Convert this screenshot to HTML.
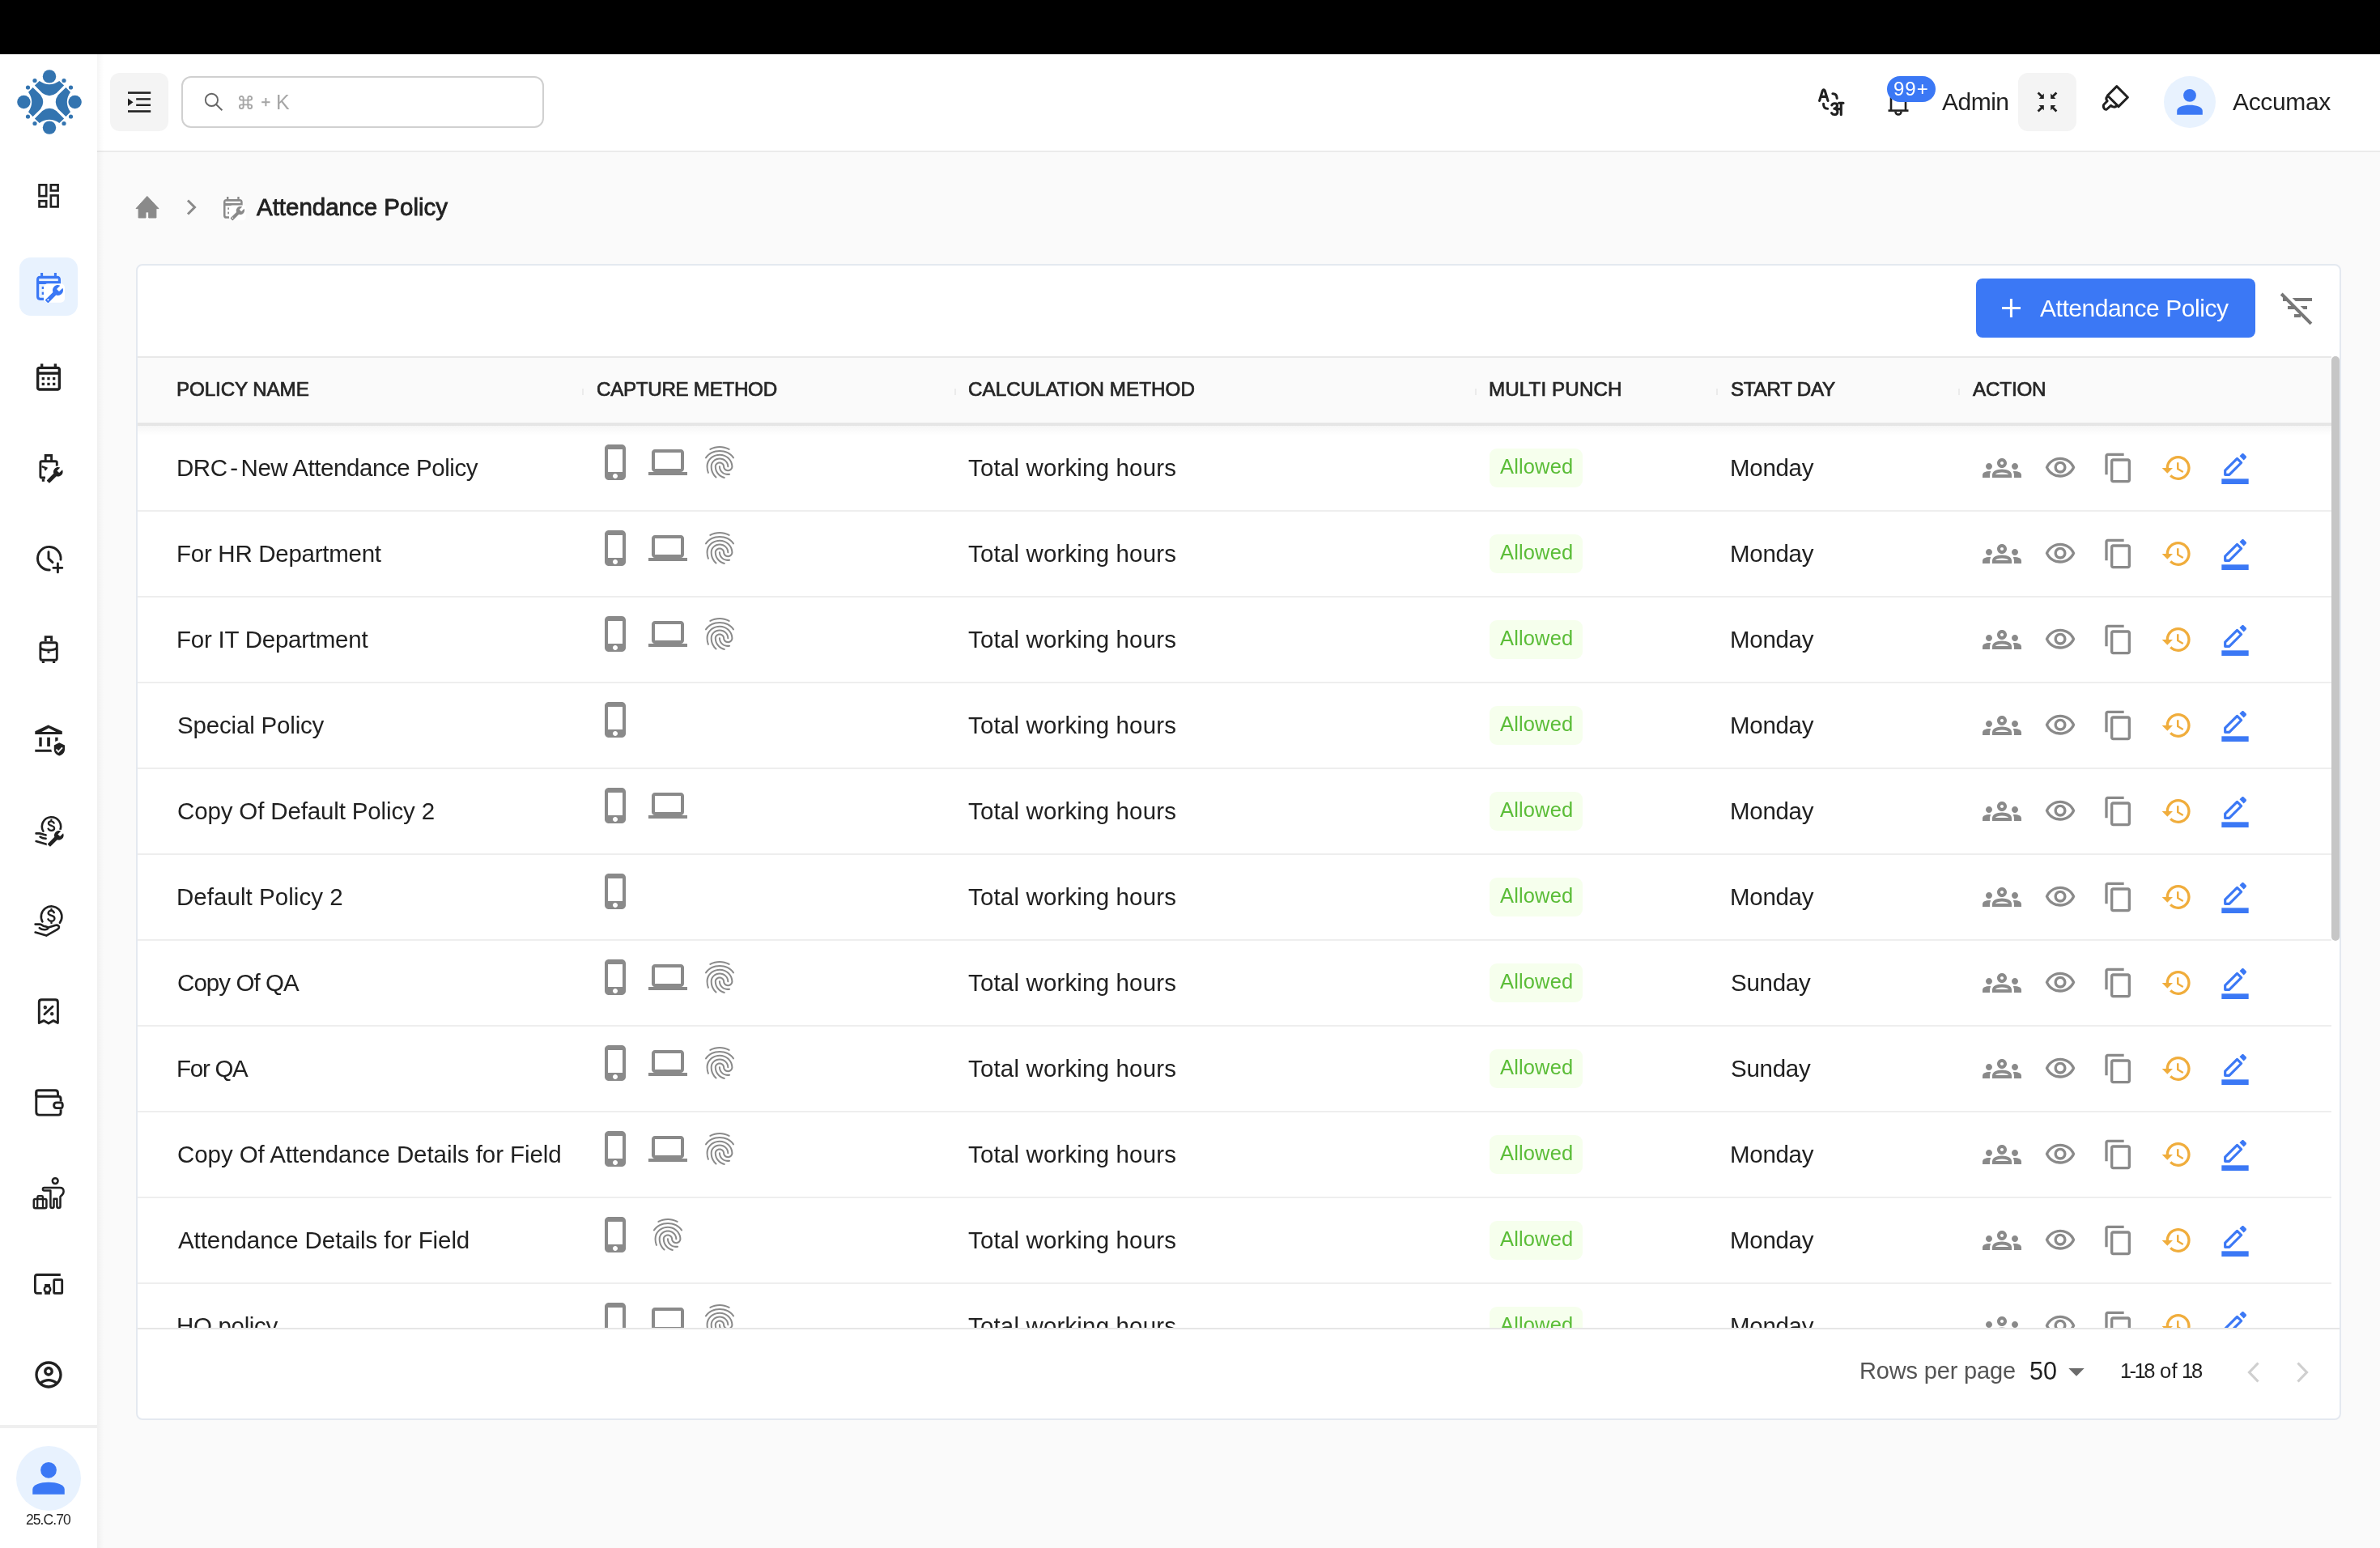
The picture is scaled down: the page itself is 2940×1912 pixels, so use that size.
<!DOCTYPE html>
<html><head><meta charset="utf-8"><title>Attendance Policy</title><style>*{box-sizing:border-box;margin:0;padding:0}
html,body{width:2940px;height:1912px;overflow:hidden;background:#fafafa;font-family:"Liberation Sans",sans-serif;color:#212121}
.abs{position:absolute}
.t{white-space:nowrap;will-change:transform}
svg{display:block;overflow:visible}</style></head><body>
<div class="abs" style="left:0;top:0;width:2940px;height:67px;background:#000"></div>
<div class="abs" style="left:0;top:67px;width:120px;height:1845px;background:#fff"></div>
<div class="abs" style="left:120px;top:67px;width:2820px;height:119px;background:#fff"></div>
<div class="abs" style="left:120px;top:186px;width:2820px;height:2px;background:#ebebeb"></div>
<div class="abs" style="left:120px;top:67px;width:8px;height:1845px;background:linear-gradient(90deg,rgba(0,0,0,0.04),rgba(0,0,0,0))"></div>
<svg class="abs" style="left:16px;top:81px" width="90" height="90" viewBox="-45 -45 90 90"><g fill="#3374b0"><g transform="rotate(0)"><path d="M-12.3,-26 Q0,-17.6 12.3,-26 L18.1,-20.4 L8.7,-10.9 Q0,-4.6 -8.7,-10.9 L-18.1,-20.4 Z"/><circle cx="0" cy="-31.6" r="8.2"/><circle cx="-18" cy="-26.5" r="2.6"/><circle cx="18" cy="-26.5" r="2.6"/></g><g transform="rotate(90)"><path d="M-12.3,-26 Q0,-17.6 12.3,-26 L18.1,-20.4 L8.7,-10.9 Q0,-4.6 -8.7,-10.9 L-18.1,-20.4 Z"/><circle cx="0" cy="-31.6" r="8.2"/><circle cx="-18" cy="-26.5" r="2.6"/><circle cx="18" cy="-26.5" r="2.6"/></g><g transform="rotate(180)"><path d="M-12.3,-26 Q0,-17.6 12.3,-26 L18.1,-20.4 L8.7,-10.9 Q0,-4.6 -8.7,-10.9 L-18.1,-20.4 Z"/><circle cx="0" cy="-31.6" r="8.2"/><circle cx="-18" cy="-26.5" r="2.6"/><circle cx="18" cy="-26.5" r="2.6"/></g><g transform="rotate(270)"><path d="M-12.3,-26 Q0,-17.6 12.3,-26 L18.1,-20.4 L8.7,-10.9 Q0,-4.6 -8.7,-10.9 L-18.1,-20.4 Z"/><circle cx="0" cy="-31.6" r="8.2"/><circle cx="-18" cy="-26.5" r="2.6"/><circle cx="18" cy="-26.5" r="2.6"/></g></g></svg>
<div class="abs" style="left:136px;top:90px;width:72px;height:72px;background:#f4f4f4;border-radius:12px"></div>
<svg class="abs" style="left:136px;top:90px" width="72" height="72" viewBox="0 0 72 72" fill="#212121"><rect x="22" y="23.3" width="28.2" height="2.6"/><rect x="32.2" y="31.2" width="17.8" height="2.4"/><rect x="32.2" y="38.6" width="17.8" height="2.4"/><rect x="22" y="46.2" width="28.2" height="2.6"/><path d="M22 31.5 L28.5 36.2 L22 41 Z"/></svg>
<div class="abs" style="left:224px;top:94px;width:448px;height:64px;border:2px solid #d0d0d0;border-radius:12px;background:#fff"></div>
<svg class="abs" style="left:249px;top:112px" width="28" height="28" viewBox="0 0 28 28" fill="none" stroke="#666" stroke-width="1.9"><circle cx="12.4" cy="11.4" r="7.6"/><path d="M17.8 16.8 L25.4 24.2"/></svg>
<svg class="abs" style="left:294px;top:117px" width="19" height="19" viewBox="0 0 20 20" fill="none" stroke="#a6a6a6" stroke-width="2"><path d="M7 7 H13 V13 H7 Z M7 7 V4.5 A2.5 2.5 0 1 0 4.5 7 H7 M13 7 V4.5 A2.5 2.5 0 1 1 15.5 7 H13 M7 13 V15.5 A2.5 2.5 0 1 1 4.5 13 H7 M13 13 V15.5 A2.5 2.5 0 1 0 15.5 13 H13"/></svg>
<svg class="abs" style="left:323px;top:121px" width="11" height="11" viewBox="0 0 11 11" fill="#a6a6a6"><rect x="4.4" y="0" width="2" height="10.2"/><rect x="0.2" y="4.2" width="10.3" height="2"/></svg>
<div class="abs t" style="left:340.90px;top:114.03px;font-size:25px;line-height:25px;font-weight:normal;color:#a6a6a6;letter-spacing:0.000px;">K</div>
<svg class="abs" style="left:2240px;top:104px" width="44" height="44" viewBox="0 0 44 44" fill="none" stroke="#212121" stroke-width="3.1" stroke-linecap="round" stroke-linejoin="round"><path d="M7.6 20.4 L11.4 8 Q12.8 5.4 14.2 8 L18 20.4 M9.9 15.4 H15.6"/><path d="M23.9 11.8 Q28.9 11.6 29.2 17.4"/><path d="M12.6 24.4 Q12.4 30.2 17.6 30.2"/><path d="M22.8 25.8 C24 23.2 29.4 22.6 29.5 26.3 C29.6 28.6 27.6 29.8 25.8 30.3 C28.6 30.4 30.2 32.2 29.9 34.7 C29.5 37.8 24.6 38.6 22.6 35.6"/><path d="M34.3 23.4 V37.6 M31.6 23.3 H37 M29 30.6 H34.3"/></svg>
<svg class="abs" style="left:2331px;top:100px" width="28" height="44" viewBox="0 0 28 44" fill="none" stroke="#212121" stroke-width="2.6"><path d="M5 36.6 V22 C5 16 9 12 14 12 C19 12 23 16 23 22 V36.6"/><path d="M1.5 36.6 H26.5"/><path d="M10.5 38 A3.5 3.5 0 0 0 17.5 38"/></svg>
<div class="abs" style="left:2331px;top:94px;width:60px;height:32px;border-radius:16px;background:#3b78f5"></div>
<div class="abs t" style="left:2339.30px;top:98.19px;font-size:24px;line-height:24px;font-weight:normal;color:#fff;letter-spacing:1.000px;">99+</div>
<div class="abs t" style="left:2398.70px;top:110.64px;font-size:30px;line-height:30px;font-weight:normal;color:#212121;letter-spacing:-0.500px;">Admin</div>
<div class="abs" style="left:2493px;top:90px;width:72px;height:72px;background:#f4f4f4;border-radius:12px"></div>
<svg class="abs" style="left:2493px;top:90px" width="72" height="72" viewBox="0 0 72 72" fill="#212121" stroke="none"><path d="M24.6 24.6 L29.6 29.6 M47.4 24.6 L42.4 29.6 M24.6 47.4 L29.6 42.4 M47.4 47.4 L42.4 42.4" stroke="#212121" stroke-width="2.8"/><path d="M31.8 25.6 V31.9 H25.6 Z M40.2 25.6 V31.9 H46.4 Z M31.8 46.2 V40.1 H25.6 Z M40.2 46.2 V40.1 H46.4 Z"/></svg>
<svg class="abs" style="left:2594px;top:103px" width="38" height="38" viewBox="0 0 38 38" fill="none" stroke="#212121" stroke-width="3" stroke-linejoin="round"><path d="M20.8 3.6 L34.4 17.2 L23 28.6 L9.4 15 Z"/><path d="M9.6 15.6 C7.6 17.6 7.4 19.8 9.2 21.8 L5.2 25.8 C3.2 27.8 5 33 8.4 32 L13.6 27.4 C15.6 29.4 18.6 30 21.2 27.4"/></svg>
<div class="abs" style="left:2673px;top:94px;width:64px;height:64px;border-radius:50%;background:#e8f2fe"></div>
<svg class="abs" style="left:2681px;top:102px" width="48" height="48" viewBox="0 0 24 24"><circle cx="12" cy="7.9" r="3.95" fill="#3b78f5"/><path fill="#3b78f5" d="M4.1 19.9 V17.5 C4.1 15 8 13.9 12 13.9 C16 13.9 19.9 15 19.9 17.5 V19.9 Z"/></svg>
<div class="abs t" style="left:2758.00px;top:110.64px;font-size:30px;line-height:30px;font-weight:normal;color:#212121;letter-spacing:-0.333px;">Accumax</div>
<svg class="abs" style="left:0;top:200px" width="120" height="70" viewBox="0 200 120 70" fill="none" stroke="#212121" stroke-width="2.7"><rect x="48.55" y="228.35" width="8.6" height="13.8"/><rect x="62.85" y="228.35" width="8.7" height="7.1"/><rect x="48.55" y="248.25" width="8.6" height="7.1"/><rect x="62.85" y="241.45" width="8.7" height="13.9"/></svg>
<div class="abs" style="left:24px;top:318px;width:72px;height:72px;background:#e8f2fe;border-radius:14px"></div>
<svg class="abs" style="left:45px;top:337px" width="36.00" height="38.00" viewBox="0 0 36 38"><path d="M9 32.3 H4.6 C2.8 32.3 1.6 31.1 1.6 29.3 V8.6 C1.6 6.8 2.8 5.4 4.6 5.4 H25.4 C27.2 5.4 28.4 6.8 28.4 8.6 V14" fill="none" stroke="#3b78f5" stroke-width="3.2"/><rect x="1.6" y="5.4" width="26.8" height="8.6" fill="#3b78f5"/><rect x="3.2" y="7.2" width="23.6" height="2.9" fill="#e8f2fe"/><rect x="5.1" y="0" width="3" height="5" fill="#3b78f5"/><rect x="21.9" y="0" width="3" height="5" fill="#3b78f5"/><rect x="6.7" y="17" width="2.6" height="3" fill="#3b78f5"/><rect x="6.7" y="23.7" width="2.4" height="3.2" fill="#3b78f5"/><rect x="9" y="13.3" width="26" height="23.5" rx="5" fill="#ffffff"/><g transform="translate(10,14)"><path d="M22.7 19l-9.1-9.1c.9-2.3.4-5-1.5-6.9-2-2-5-2.4-7.4-1.3L9 6 6 9 1.6 4.7C.4 7.1.9 10.1 2.9 12.1c1.9 1.9 4.6 2.4 6.9 1.5l9.1 9.1c.4.4 1 .4 1.4 0l2.3-2.3c.5-.4.5-1.1.1-1.4z" fill="#3b78f5" transform="translate(24,0) scale(-1,1)"/></g><circle cx="14.4" cy="33.2" r="1" fill="#ffffff"/></svg>
<svg class="abs" style="left:40.0px;top:446.0px" width="40" height="40" viewBox="0 0 24 24"><path fill="#212121" d="M19 4h-1V2h-2v2H8V2H6v2H5c-1.11 0-1.99.9-1.99 2L3 20c0 1.1.89 2 2 2h14c1.1 0 2-.9 2-2V6c0-1.1-.9-2-2-2zm0 16H5V10h14v10zm0-12H5V6h14v2zM9 14H7v-2h2v2zm4 0h-2v-2h2v2zm4 0h-2v-2h2v2zm-8 4H7v-2h2v2zm4 0h-2v-2h2v2zm4 0h-2v-2h2v2z"/></svg>
<svg class="abs" style="left:0;top:0;width:120px;height:1912px;overflow:visible" width="120" height="1912" viewBox="0 0 120 1912" fill="none" stroke="#212121" stroke-width="2.9"><path d="M56.2 569 V562.5 H63.6 V569"/><path d="M56 590 H51.5 C50.3 590 49.9 589.4 49.9 588.2 V571.6 C49.9 570.4 50.5 569.8 51.7 569.8 H68.5 C69.7 569.8 70.3 570.4 70.3 571.6 V575.7"/><path d="M51.6 576.2 L57.2 578.4 L55.4 580.8" stroke-width="2.4"/><path d="M53.4 591.5 V594.8" stroke-width="3.2"/><path d="M75 691.2 A14.3 14.3 0 1 0 61.2 704" stroke-linecap="round"/><path d="M60 681.8 V689.9 L65 694.6" stroke-linecap="round"/><path d="M65.9 701.4 H76.8 M71.4 695.9 V706.9" stroke-linecap="round"/><path d="M56.2 792 V786.6 H63.6 V792"/><rect x="49.9" y="793.7" width="20.4" height="21.5" rx="2.2"/><path d="M50.2 800.6 C54 803.8 66 803.8 69.8 800.6"/><path d="M60 804.5 V806.8"/><path d="M53.4 816.5 V818.9 M66.6 816.5 V818.9" stroke-width="3.2"/><path d="M48.3 1263.5 V1237.8 C48.3 1235.8 49.6 1234.8 51.4 1234.8 H68.4 C70.3 1234.8 71.4 1235.8 71.4 1237.8 V1263.5 L66 1260.6 L60 1264 L54 1260.6 Z" stroke-linejoin="round"/><path d="M55 1252.8 L65 1243.2" stroke-linecap="round"/><circle cx="55.8" cy="1244.3" r="1.3" stroke-width="1.8"/><circle cx="64.2" cy="1252.2" r="1.3" stroke-width="1.8"/><path d="M44.8 1354.2 V1348.6 C44.8 1347.6 46 1346.8 47.4 1346.8 H68.4 C70.4 1346.8 71.5 1348 71.5 1350 V1354.2"/><path d="M44.8 1348.5 V1373.4 C44.8 1375.6 46.2 1377.1 48.4 1377.1 H72.2 C74.1 1377.1 75.1 1376 75.1 1374 V1370.2 M75.1 1360.5 V1357.3 C75.1 1355.4 74.2 1354.2 72.4 1354.2 H45"/><path d="M75.5 1361.9 H70 C67.8 1361.9 66.6 1363.3 66.6 1365.3 C66.6 1367.3 67.8 1368.6 70 1368.6 H75.5 C77 1368.6 77.3 1367.2 77.3 1365.3 C77.3 1363.4 77 1361.9 75.5 1361.9 Z"/><circle cx="68.2" cy="1458.6" r="3.4" stroke-width="2.5"/><path d="M74.5 1490.5 V1477.9 C77.6 1475.6 78.6 1473.6 78.6 1471.4 C78.6 1468.6 76.8 1466.9 74 1466.9 H54.6 C53.6 1466.9 52.9 1467.7 52.9 1468.7 C52.9 1469.7 53.6 1470.5 54.6 1470.5 H62.4 V1489.9 C62.4 1491 63.2 1491.9 64.4 1491.9 C65.6 1491.9 66.5 1491 66.5 1489.9 V1480.8 H70.4 V1489.9 C70.4 1491 71.3 1491.9 72.5 1491.9 C73.6 1491.9 74.5 1491 74.5 1489.9" stroke-width="2.5" stroke-linejoin="round"/><rect x="41.8" y="1481" width="15.6" height="11.3" rx="1.8" stroke-width="2.5"/><path d="M46.2 1481 V1492 M53 1481 V1492 M46.4 1480.5 V1478.4 C46.4 1477.6 47 1477.2 47.8 1477.2 H51.6 C52.4 1477.2 52.9 1477.6 52.9 1478.4 V1480.5" stroke-width="2.3"/><path d="M52.4 1138.4 A12.8 12.8 0 1 1 73.9 1139.8" stroke-linecap="round" stroke-width="2.6"/><path d="M66.8 1127.2 C66 1125.5 64.8 1124.8 63.3 1124.8 C61.2 1124.8 59.6 1126 59.6 1127.8 C59.6 1130 62 1130.5 64 1131 C66 1131.5 67.4 1132.4 67.4 1134.4 C67.4 1136.4 65.6 1137.8 63.4 1137.8 C61.6 1137.8 60.2 1136.8 59.4 1135.3 M63.5 1123 V1124.8 M63.5 1137.8 V1140" stroke-width="2.4" stroke-linecap="round"/><path d="M43.6 1141.6 H49 C50.6 1141.6 52 1142.6 53.6 1143.6 C55 1144.4 58.2 1144.3 59 1145.6 C59.8 1146.8 58.6 1147.7 57 1148 C54.2 1148.6 51.2 1148.2 48.8 1146.2" stroke-linecap="round" stroke-width="2.6"/><path d="M59.2 1145.8 L68 1143 C70 1142.4 71.8 1142.8 72.6 1144 C73.4 1145.4 72.8 1146.8 71 1147.8 L57.2 1155.6 L43.6 1151.6" stroke-linecap="round" stroke-linejoin="round" stroke-width="2.6"/><path d="M53.4 1026.6 A11.6 11.6 0 1 1 74.4 1024.8" stroke-linecap="round" stroke-width="2.6"/><path d="M66.6 1016.6 C65.8 1015 64.7 1014.4 63.3 1014.4 C61.4 1014.4 59.9 1015.5 59.9 1017.1 C59.9 1019 62 1019.5 63.9 1020 C65.8 1020.5 67.1 1021.3 67.1 1023 C67.1 1024.8 65.4 1025.8 63.3 1025.8 C61.7 1025.8 60.3 1025 59.6 1023.6 M63.4 1012.6 V1014.4" stroke-width="2.3" stroke-linecap="round"/><path d="M44.6 1029.4 H48.8 C51 1029.4 53.6 1031.2 56.6 1031.4 M49.6 1033.6 C51.6 1035 54 1035.8 56.6 1035.8 M44.6 1039 L57.4 1042.8" stroke-linecap="round" stroke-width="2.6"/><path d="M43.3 906.9 V903.3 L59.6 895.6 L76.8 903.3 V906.9 Z M51.4 904 H69.2 L60.2 899.3 Z" fill="#212121" stroke="none" fill-rule="evenodd"/><path d="M48.3 910.8 H51.7 V921.9 H48.3 Z M58.2 910.8 H61.9 V921.9 H58.2 Z M68.2 910.8 H71.6 V914.5 L68.2 916 Z M43.3 925.7 H63.3 L64 928.7 H43.3 Z" fill="#212121" stroke="none"/><path d="M73.3 917.3 L80 920.6 V925.6 C80 929.4 77.2 932.4 73.3 933.6 C69.4 932.4 66.8 929.4 66.8 925.6 V920.6 Z" fill="#212121" stroke="none"/><path d="M69.4 925.6 L72.1 928.6 L77 923.4" stroke="#fff" stroke-width="1.8" fill="none"/></svg>
<svg class="abs" style="left:56.5px;top:576.4px" width="21.5" height="21.5" viewBox="0 0 24 24"><path d="M22.7 19l-9.1-9.1c.9-2.3.4-5-1.5-6.9-2-2-5-2.4-7.4-1.3L9 6 6 9 1.6 4.7C.4 7.1.9 10.1 2.9 12.1c1.9 1.9 4.6 2.4 6.9 1.5l9.1 9.1c.4.4 1 .4 1.4 0l2.3-2.3c.5-.4.5-1.1.1-1.4z" fill="none" stroke="#ffffff" stroke-width="3" transform="translate(24,0) scale(-1,1)"/><path d="M22.7 19l-9.1-9.1c.9-2.3.4-5-1.5-6.9-2-2-5-2.4-7.4-1.3L9 6 6 9 1.6 4.7C.4 7.1.9 10.1 2.9 12.1c1.9 1.9 4.6 2.4 6.9 1.5l9.1 9.1c.4.4 1 .4 1.4 0l2.3-2.3c.5-.4.5-1.1.1-1.4z" fill="#212121" transform="translate(24,0) scale(-1,1)"/></svg>
<svg class="abs" style="left:58.3px;top:1025.4px" width="21.5" height="21.5" viewBox="0 0 24 24"><path d="M22.7 19l-9.1-9.1c.9-2.3.4-5-1.5-6.9-2-2-5-2.4-7.4-1.3L9 6 6 9 1.6 4.7C.4 7.1.9 10.1 2.9 12.1c1.9 1.9 4.6 2.4 6.9 1.5l9.1 9.1c.4.4 1 .4 1.4 0l2.3-2.3c.5-.4.5-1.1.1-1.4z" fill="none" stroke="#ffffff" stroke-width="3" transform="translate(24,0) scale(-1,1)"/><path d="M22.7 19l-9.1-9.1c.9-2.3.4-5-1.5-6.9-2-2-5-2.4-7.4-1.3L9 6 6 9 1.6 4.7C.4 7.1.9 10.1 2.9 12.1c1.9 1.9 4.6 2.4 6.9 1.5l9.1 9.1c.4.4 1 .4 1.4 0l2.3-2.3c.5-.4.5-1.1.1-1.4z" fill="#212121" transform="translate(24,0) scale(-1,1)"/></svg>
<svg class="abs" style="left:0;top:1550px" width="120" height="60" viewBox="0 1550 120 60" fill="none" stroke="#212121" stroke-width="2.8"><path d="M74.8 1574.5 H46 C44.4 1574.5 43.4 1575.5 43.4 1577 V1594.8 C43.4 1596.4 44.4 1597.4 46 1597.4 H51.7"/><rect x="66.7" y="1580.6" width="10" height="16.8" rx="0.8"/><circle cx="58.5" cy="1592.5" r="3.7" stroke-width="2.5"/><rect x="55.1" y="1586" width="6.8" height="3" fill="#212121" stroke="none"/><rect x="55.1" y="1596" width="6.8" height="2.8" fill="#212121" stroke="none"/></svg>
<svg class="abs" style="left:40.0px;top:1678.0px" width="40" height="40" viewBox="0 0 24 24"><path fill="#212121" d="M12 2C6.48 2 2 6.48 2 12s4.48 10 10 10 10-4.48 10-10S17.52 2 12 2zM7.35 18.5C8.66 17.56 10.26 17 12 17s3.34.56 4.65 1.5c-1.31.94-2.91 1.5-4.65 1.5s-3.34-.56-4.65-1.5zm10.79-1.38C16.45 15.8 14.32 15 12 15s-4.45.8-6.14 2.12C4.7 15.73 4 13.95 4 12c0-4.42 3.58-8 8-8s8 3.58 8 8c0 1.95-.7 3.73-1.86 5.12zM12 6c-1.93 0-3.5 1.57-3.5 3.5S10.07 13 12 13s3.5-1.57 3.5-3.5S13.93 6 12 6zm0 5c-.83 0-1.5-.67-1.5-1.5S11.17 8 12 8s1.5.67 1.5 1.5S12.83 11 12 11z"/></svg>
<div class="abs" style="left:0;top:1760px;width:120px;height:4px;background:#efefef"></div>
<div class="abs" style="left:20px;top:1786px;width:80px;height:80px;border-radius:50%;background:#e8f2fe"></div>
<svg class="abs" style="left:30px;top:1796px" width="60" height="60" viewBox="0 0 24 24"><circle cx="12" cy="7.9" r="3.95" fill="#3b78f5"/><path fill="#3b78f5" d="M4.1 19.9 V17.5 C4.1 15 8 13.9 12 13.9 C16 13.9 19.9 15 19.9 17.5 V19.9 Z"/></svg>
<div class="abs t" style="left:31.50px;top:1869.22px;font-size:17.5px;line-height:17.5px;font-weight:normal;color:#262626;letter-spacing:-0.933px;">25.C.70</div>
<svg class="abs" style="left:166px;top:240px" width="32" height="32" viewBox="0 0 32 32" fill="#8a8a8a"><path d="M15.8 2.4 L30 17.6 H26.9 V29 H17.7 V21.9 H14 V29 H5.1 V17.6 H2 Z" stroke="#8a8a8a" stroke-width="1" stroke-linejoin="round"/></svg>
<svg class="abs" style="left:226px;top:244px" width="20" height="24" viewBox="0 0 20 24" fill="none" stroke="#8a8a8a" stroke-width="3"><path d="M6 3.5 L14.5 12 L6 20.5"/></svg>
<svg class="abs" style="left:276px;top:242.8px" width="28.44" height="30.02" viewBox="0 0 36 38"><path d="M9 32.3 H4.6 C2.8 32.3 1.6 31.1 1.6 29.3 V8.6 C1.6 6.8 2.8 5.4 4.6 5.4 H25.4 C27.2 5.4 28.4 6.8 28.4 8.6 V14" fill="none" stroke="#8a8a8a" stroke-width="3.2"/><rect x="1.6" y="5.4" width="26.8" height="8.6" fill="#8a8a8a"/><rect x="3.2" y="7.2" width="23.6" height="2.9" fill="#f9f9f9"/><rect x="5.1" y="0" width="3" height="5" fill="#8a8a8a"/><rect x="21.9" y="0" width="3" height="5" fill="#8a8a8a"/><rect x="6.7" y="17" width="2.6" height="3" fill="#8a8a8a"/><rect x="6.7" y="23.7" width="2.4" height="3.2" fill="#8a8a8a"/><rect x="9" y="13.3" width="26" height="23.5" rx="5" fill="#ffffff"/><g transform="translate(10,14)"><path d="M22.7 19l-9.1-9.1c.9-2.3.4-5-1.5-6.9-2-2-5-2.4-7.4-1.3L9 6 6 9 1.6 4.7C.4 7.1.9 10.1 2.9 12.1c1.9 1.9 4.6 2.4 6.9 1.5l9.1 9.1c.4.4 1 .4 1.4 0l2.3-2.3c.5-.4.5-1.1.1-1.4z" fill="#8a8a8a" transform="translate(24,0) scale(-1,1)"/></g><circle cx="14.4" cy="33.2" r="1" fill="#ffffff"/></svg>
<div class="abs t" style="left:317.00px;top:241.02px;font-size:29.5px;line-height:29.5px;font-weight:normal;color:#212121;letter-spacing:-0.012px;-webkit-text-stroke:0.83px #212121;">Attendance Policy</div>
<div class="abs" style="left:168px;top:326px;width:2724px;height:1428px;background:#fff;border:2px solid #e4e9f0;border-radius:8px"></div>
<div class="abs" style="left:2441px;top:344px;width:345px;height:73px;background:#3b78f5;border-radius:8px"></div>
<svg class="abs" style="left:2472px;top:368px" width="25" height="25" viewBox="0 0 25 25" fill="#fff"><rect x="10.9" y="1" width="3" height="23"/><rect x="1" y="11" width="23" height="3"/></svg>
<div class="abs t" style="left:2520.00px;top:366.14px;font-size:30px;line-height:30px;font-weight:normal;color:#fff;letter-spacing:-0.450px;">Attendance Policy</div>
<svg class="abs" style="left:2814px;top:356px" width="48" height="48" viewBox="0 0 24 24"><path fill="#777" d="M10.83 8H21V6H8.83l2 2zm5 5H18v-2h-4.17l2 2zM14 16.83V18h-4v-2h3.17l-3-3H6v-2h2.17l-3-3H3V6h.17L1.39 4.22 2.8 2.81l18.38 18.38-1.41 1.41L14 16.83z"/></svg>
<div class="abs" style="left:170px;top:440px;width:2710px;height:2px;background:#e8e8e8"></div>
<div class="abs" style="left:170px;top:442px;width:2710px;height:80px;background:#fafafa"></div>
<div class="abs" style="left:170px;top:522px;width:2710px;height:4px;background:#e6e6e6"></div>
<div class="abs" style="left:170px;top:526px;width:2710px;height:12px;background:linear-gradient(180deg,rgba(0,0,0,0.035),rgba(0,0,0,0))"></div>
<div class="abs t" style="left:218.20px;top:468.76px;font-size:24.2px;line-height:24.2px;font-weight:normal;color:#262626;letter-spacing:-0.110px;-webkit-text-stroke:0.73px #262626;">POLICY NAME</div>
<div class="abs t" style="left:736.70px;top:468.76px;font-size:24.2px;line-height:24.2px;font-weight:normal;color:#262626;letter-spacing:-0.308px;-webkit-text-stroke:0.73px #262626;">CAPTURE METHOD</div>
<div class="abs t" style="left:1196.40px;top:468.76px;font-size:24.2px;line-height:24.2px;font-weight:normal;color:#262626;letter-spacing:0.047px;-webkit-text-stroke:0.73px #262626;">CALCULATION METHOD</div>
<div class="abs t" style="left:1839.00px;top:468.76px;font-size:24.2px;line-height:24.2px;font-weight:normal;color:#262626;letter-spacing:0.100px;-webkit-text-stroke:0.73px #262626;">MULTI PUNCH</div>
<div class="abs t" style="left:2137.60px;top:468.76px;font-size:24.2px;line-height:24.2px;font-weight:normal;color:#262626;letter-spacing:-0.262px;-webkit-text-stroke:0.73px #262626;">START DAY</div>
<div class="abs t" style="left:2437.40px;top:468.76px;font-size:24.2px;line-height:24.2px;font-weight:normal;color:#262626;letter-spacing:-0.160px;-webkit-text-stroke:0.73px #262626;">ACTION</div>
<div class="abs" style="left:718.5px;top:480px;width:2px;height:8px;background:#ebebeb"></div>
<div class="abs" style="left:1179.0px;top:480px;width:2px;height:8px;background:#ebebeb"></div>
<div class="abs" style="left:1822.4px;top:480px;width:2px;height:8px;background:#ebebeb"></div>
<div class="abs" style="left:2120.3px;top:480px;width:2px;height:8px;background:#ebebeb"></div>
<div class="abs" style="left:2419.0px;top:480px;width:2px;height:8px;background:#ebebeb"></div>
<div class="abs" style="left:2880px;top:440px;width:10px;height:722px;background:#c6c6c6;border-radius:5px"></div>
<div class="abs" style="left:170px;top:526px;width:2710px;height:1114px;overflow:hidden"><div class="abs" style="left:-170px;top:-526px;width:2940px;height:1912px"><div class="abs" style="left:170px;top:630px;width:2710px;height:2px;background:#eeeeee"></div><div class="abs t" style="left:217.70px;top:563.22px;font-size:29.5px;line-height:29.5px;font-weight:normal;color:#212121;letter-spacing:-0.438px;">DRC<span style="word-spacing:-4px"> - </span>New Attendance Policy</div><svg class="abs" style="left:737px;top:547px" width="48" height="48" viewBox="0 0 24 24"><path fill="#8a8a8a" d="M15.5 1h-8C6.12 1 5 2.12 5 3.5v17C5 21.88 6.12 23 7.5 23h8c1.38 0 2.5-1.12 2.5-2.5v-17C18 2.12 16.88 1 15.5 1zm-4 21c-.83 0-1.5-.67-1.5-1.5s.67-1.5 1.5-1.5 1.5.67 1.5 1.5-.67 1.5-1.5 1.5zm4.5-4H7V4h9v14z"/></svg><svg class="abs" style="left:801px;top:547px" width="48" height="48" viewBox="0 0 24 24"><path fill="#8a8a8a" d="M20 18c1.1 0 1.99-.9 1.99-2L22 6c0-1.1-.9-2-2-2H4c-1.1 0-2 .9-2 2v10c0 1.1.9 2 2 2H0v2h24v-2h-4zM4 6h16v10H4V6z"/></svg><svg class="abs" style="left:865px;top:547px" width="48" height="48" viewBox="0 0 24 24"><path fill="#8a8a8a" d="M17.81 4.47c-.08 0-.16-.02-.23-.06C15.66 3.42 14 3 12.01 3c-1.98 0-3.86.47-5.57 1.41-.24.13-.54.04-.68-.2-.13-.24-.04-.55.2-.68C7.82 2.52 9.86 2 12.01 2c2.14 0 3.99.47 6.02 1.52.25.13.34.43.21.67-.09.18-.26.28-.43.28zM3.5 9.72c-.1 0-.2-.03-.29-.09-.23-.16-.28-.47-.12-.7.99-1.4 2.25-2.5 3.75-3.27C9.98 4.04 14 4.03 17.15 5.65c1.5.77 2.76 1.86 3.75 3.25.16.22.11.54-.12.7-.23.16-.54.11-.7-.12-.9-1.26-2.04-2.25-3.39-2.94-2.87-1.47-6.54-1.47-9.4.01-1.36.7-2.5 1.7-3.4 2.96-.08.14-.23.21-.39.21zm6.25 12.07c-.13 0-.26-.05-.35-.15-.87-.87-1.34-1.43-2.01-2.64-.69-1.23-1.05-2.73-1.05-4.34 0-2.97 2.54-5.39 5.66-5.39s5.66 2.42 5.66 5.39c0 .28-.22.5-.5.5s-.5-.22-.5-.5c0-2.42-2.09-4.39-4.66-4.39-2.57 0-4.66 1.97-4.66 4.39 0 1.44.32 2.77.93 3.85.64 1.15 1.08 1.64 1.85 2.42.19.2.19.51 0 .71-.11.1-.24.15-.37.15zm7.17-1.85c-1.19 0-2.24-.3-3.1-.89-1.49-1.01-2.38-2.65-2.38-4.39 0-.28.22-.5.5-.5s.5.22.5.5c0 1.41.72 2.74 1.94 3.56.71.48 1.54.71 2.54.71.24 0 .64-.03 1.04-.1.27-.05.53.13.58.41.05.27-.13.53-.41.58-.57.11-1.07.12-1.21.12zM14.91 22c-.04 0-.09-.01-.13-.02-1.59-.44-2.63-1.03-3.72-2.1-1.4-1.39-2.17-3.24-2.17-5.22 0-1.62 1.38-2.94 3.08-2.94 1.7 0 3.08 1.32 3.08 2.94 0 1.07.93 1.94 2.08 1.94s2.08-.87 2.08-1.94c0-3.77-3.25-6.83-7.25-6.83-2.84 0-5.44 1.58-6.61 4.03-.39.81-.59 1.76-.59 2.8 0 .78.07 2.01.67 3.61.1.26-.03.55-.29.64-.26.1-.55-.04-.64-.29-.49-1.31-.73-2.61-.73-3.96 0-1.2.23-2.290.68-3.24 1.33-2.79 4.28-4.6 7.51-4.6 4.55 0 8.25 3.51 8.25 7.83 0 1.62-1.38 2.94-3.08 2.94s-3.080-1.32-3.08-2.94c0-1.07-.93-1.94-2.08-1.94s-2.08.87-2.08 1.94c0 1.71.66 3.31 1.87 4.51.95.94 1.86 1.46 3.27 1.85.27.07.42.35.35.61-.05.23-.26.38-.47.38z"/></svg><div class="abs t" style="left:1196.40px;top:563.22px;font-size:29.5px;line-height:29.5px;font-weight:normal;color:#212121;letter-spacing:0.156px;">Total working hours</div><div class="abs" style="left:1840px;top:554px;width:115px;height:48px;background:#f6ffed;border-radius:9px"></div><div class="abs t" style="left:1852.60px;top:564.35px;font-size:25.5px;line-height:25.5px;font-weight:normal;color:#5bbd38;letter-spacing:0.150px;">Allowed</div><div class="abs t" style="left:2136.60px;top:563.22px;font-size:29.5px;line-height:29.5px;font-weight:normal;color:#212121;letter-spacing:-0.300px;">Monday</div><svg class="abs" style="left:2449px;top:554px" width="48" height="48" viewBox="0 0 24 24"><path fill="#8a8a8a" d="M4 13c1.1 0 2-.9 2-2s-.9-2-2-2-2 .9-2 2 .9 2 2 2zm1.13 1.1c-.37-.06-.74-.1-1.13-.1-.99 0-1.93.21-2.78.58C.48 14.9 0 15.62 0 16.43V18h4.5v-1.61c0-.83.23-1.61.63-2.29zM20 13c1.1 0 2-.9 2-2s-.9-2-2-2-2 .9-2 2 .9 2 2 2zm4 3.43c0-.81-.48-1.53-1.22-1.85-.85-.37-1.79-.58-2.78-.58-.39 0-.76.04-1.13.1.4.68.63 1.46.63 2.29V18H24v-1.57zm-7.76-2.78c-1.17-.52-2.61-.9-4.24-.9-1.63 0-3.07.39-4.24.9C6.68 14.13 6 15.21 6 16.39V18h12v-1.61c0-1.18-.68-2.26-1.76-2.74zM8.07 16c.09-.23.13-.39.91-.69.97-.38 1.99-.56 3.02-.56s2.05.18 3.02.56c.77.3.81.46.91.69H8.07zM12 8c.55 0 1 .45 1 1s-.45 1-1 1-1-.45-1-1 .45-1 1-1m0-2c-1.66 0-3 1.34-3 3s1.34 3 3 3 3-1.34 3-3-1.34-3-3-3z"/></svg><svg class="abs" style="left:2525.3px;top:558px" width="40" height="40" viewBox="0 0 24 24"><path fill="#8a8a8a" d="M12 6c3.79 0 7.17 2.13 8.82 5.5C19.17 14.87 15.79 17 12 17s-7.17-2.13-8.82-5.5C4.83 8.13 8.21 6 12 6m0-2C7 4 2.73 7.11 1 11.5 2.73 15.89 7 19 12 19s9.27-3.11 11-7.5C21.27 7.11 17 4 12 4zm0 5c1.38 0 2.5 1.12 2.5 2.5S13.38 14 12 14s-2.5-1.12-2.5-2.5S10.62 9 12 9m0-2c-2.48 0-4.5 2.02-4.5 4.5S9.52 16 12 16s4.5-2.02 4.5-4.5S14.48 7 12 7z"/></svg><svg class="abs" style="left:2596.7px;top:558px" width="40" height="40" viewBox="0 0 24 24"><path fill="#8a8a8a" d="M16 1H4c-1.1 0-2 .9-2 2v14h2V3h12V1zm3 4H8c-1.1 0-2 .9-2 2v14c0 1.1.9 2 2 2h11c1.1 0 2-.9 2-2V7c0-1.1-.9-2-2-2zm0 16H8V7h11v14z"/></svg><svg class="abs" style="left:2669.3px;top:558px" width="40" height="40" viewBox="0 0 24 24"><path fill="#f0ad3c" d="M13 3c-4.97 0-9 4.03-9 9H1l3.89 3.89.07.14L9 12H6c0-3.87 3.13-7 7-7s7 3.13 7 7-3.13 7-7 7c-1.93 0-3.68-.79-4.94-2.06l-1.42 1.42C8.27 19.99 10.51 21 13 21c4.97 0 9-4.03 9-9s-4.03-9-9-9zm-1 5v5l4.28 2.54.72-1.21-3.5-2.08V8H12z"/></svg><svg class="abs" style="left:2740.7px;top:558px" width="40" height="40" viewBox="0 0 24 24"><rect x="2" y="20" width="20" height="4" fill="#3b78f5"/><path d="M4.6 17 V13.9 L13.5 5 L16.6 8.1 L7.7 17 Z" fill="none" stroke="#3b78f5" stroke-width="1.9" stroke-linejoin="round"/><path d="M15.3 3.2 L17 1.5 C17.4 1.1 18 1.1 18.4 1.5 L20.1 3.2 C20.5 3.6 20.5 4.2 20.1 4.6 L18.4 6.3 Z" fill="#3b78f5"/></svg><div class="abs" style="left:170px;top:736px;width:2710px;height:2px;background:#eeeeee"></div><div class="abs t" style="left:217.70px;top:669.22px;font-size:29.5px;line-height:29.5px;font-weight:normal;color:#212121;letter-spacing:-0.275px;">For HR Department</div><svg class="abs" style="left:737px;top:653px" width="48" height="48" viewBox="0 0 24 24"><path fill="#8a8a8a" d="M15.5 1h-8C6.12 1 5 2.12 5 3.5v17C5 21.88 6.12 23 7.5 23h8c1.38 0 2.5-1.12 2.5-2.5v-17C18 2.12 16.88 1 15.5 1zm-4 21c-.83 0-1.5-.67-1.5-1.5s.67-1.5 1.5-1.5 1.5.67 1.5 1.5-.67 1.5-1.5 1.5zm4.5-4H7V4h9v14z"/></svg><svg class="abs" style="left:801px;top:653px" width="48" height="48" viewBox="0 0 24 24"><path fill="#8a8a8a" d="M20 18c1.1 0 1.99-.9 1.99-2L22 6c0-1.1-.9-2-2-2H4c-1.1 0-2 .9-2 2v10c0 1.1.9 2 2 2H0v2h24v-2h-4zM4 6h16v10H4V6z"/></svg><svg class="abs" style="left:865px;top:653px" width="48" height="48" viewBox="0 0 24 24"><path fill="#8a8a8a" d="M17.81 4.47c-.08 0-.16-.02-.23-.06C15.66 3.42 14 3 12.01 3c-1.98 0-3.86.47-5.57 1.41-.24.13-.54.04-.68-.2-.13-.24-.04-.55.2-.68C7.82 2.52 9.86 2 12.01 2c2.14 0 3.99.47 6.02 1.52.25.13.34.43.21.67-.09.18-.26.28-.43.28zM3.5 9.72c-.1 0-.2-.03-.29-.09-.23-.16-.28-.47-.12-.7.99-1.4 2.25-2.5 3.75-3.27C9.98 4.04 14 4.03 17.15 5.65c1.5.77 2.76 1.86 3.75 3.25.16.22.11.54-.12.7-.23.16-.54.11-.7-.12-.9-1.26-2.04-2.25-3.39-2.94-2.87-1.47-6.54-1.47-9.4.01-1.36.7-2.5 1.7-3.4 2.96-.08.14-.23.21-.39.21zm6.25 12.07c-.13 0-.26-.05-.35-.15-.87-.87-1.34-1.43-2.01-2.64-.69-1.23-1.05-2.73-1.05-4.34 0-2.97 2.54-5.39 5.66-5.39s5.66 2.42 5.66 5.39c0 .28-.22.5-.5.5s-.5-.22-.5-.5c0-2.42-2.09-4.39-4.66-4.39-2.57 0-4.66 1.97-4.66 4.39 0 1.44.32 2.77.93 3.85.64 1.15 1.08 1.64 1.85 2.42.19.2.19.51 0 .71-.11.1-.24.15-.37.15zm7.17-1.85c-1.19 0-2.24-.3-3.1-.89-1.49-1.01-2.38-2.65-2.38-4.39 0-.28.22-.5.5-.5s.5.22.5.5c0 1.41.72 2.74 1.94 3.56.71.48 1.54.71 2.54.71.24 0 .64-.03 1.04-.1.27-.05.53.13.58.41.05.27-.13.53-.41.58-.57.11-1.07.12-1.21.12zM14.91 22c-.04 0-.09-.01-.13-.02-1.59-.44-2.63-1.03-3.72-2.1-1.4-1.39-2.17-3.24-2.17-5.22 0-1.62 1.38-2.94 3.08-2.94 1.7 0 3.08 1.32 3.08 2.94 0 1.07.93 1.94 2.08 1.94s2.08-.87 2.08-1.94c0-3.77-3.25-6.83-7.25-6.83-2.84 0-5.44 1.58-6.61 4.03-.39.81-.59 1.76-.59 2.8 0 .78.07 2.01.67 3.61.1.26-.03.55-.29.64-.26.1-.55-.04-.64-.29-.49-1.31-.73-2.61-.73-3.96 0-1.2.23-2.290.68-3.24 1.33-2.79 4.28-4.6 7.51-4.6 4.55 0 8.25 3.51 8.25 7.83 0 1.62-1.38 2.94-3.08 2.94s-3.080-1.32-3.08-2.94c0-1.07-.93-1.94-2.08-1.94s-2.08.87-2.08 1.94c0 1.71.66 3.31 1.87 4.51.95.94 1.86 1.46 3.27 1.85.27.07.42.35.35.61-.05.23-.26.38-.47.38z"/></svg><div class="abs t" style="left:1196.40px;top:669.22px;font-size:29.5px;line-height:29.5px;font-weight:normal;color:#212121;letter-spacing:0.156px;">Total working hours</div><div class="abs" style="left:1840px;top:660px;width:115px;height:48px;background:#f6ffed;border-radius:9px"></div><div class="abs t" style="left:1852.60px;top:670.35px;font-size:25.5px;line-height:25.5px;font-weight:normal;color:#5bbd38;letter-spacing:0.150px;">Allowed</div><div class="abs t" style="left:2136.60px;top:669.22px;font-size:29.5px;line-height:29.5px;font-weight:normal;color:#212121;letter-spacing:-0.300px;">Monday</div><svg class="abs" style="left:2449px;top:660px" width="48" height="48" viewBox="0 0 24 24"><path fill="#8a8a8a" d="M4 13c1.1 0 2-.9 2-2s-.9-2-2-2-2 .9-2 2 .9 2 2 2zm1.13 1.1c-.37-.06-.74-.1-1.13-.1-.99 0-1.93.21-2.78.58C.48 14.9 0 15.62 0 16.43V18h4.5v-1.61c0-.83.23-1.61.63-2.29zM20 13c1.1 0 2-.9 2-2s-.9-2-2-2-2 .9-2 2 .9 2 2 2zm4 3.43c0-.81-.48-1.53-1.22-1.85-.85-.37-1.79-.58-2.78-.58-.39 0-.76.04-1.13.1.4.68.63 1.46.63 2.29V18H24v-1.57zm-7.76-2.78c-1.17-.52-2.61-.9-4.24-.9-1.63 0-3.07.39-4.24.9C6.68 14.13 6 15.21 6 16.39V18h12v-1.61c0-1.18-.68-2.26-1.76-2.74zM8.07 16c.09-.23.13-.39.91-.69.97-.38 1.99-.56 3.02-.56s2.05.18 3.02.56c.77.3.81.46.91.69H8.07zM12 8c.55 0 1 .45 1 1s-.45 1-1 1-1-.45-1-1 .45-1 1-1m0-2c-1.66 0-3 1.34-3 3s1.34 3 3 3 3-1.34 3-3-1.34-3-3-3z"/></svg><svg class="abs" style="left:2525.3px;top:664px" width="40" height="40" viewBox="0 0 24 24"><path fill="#8a8a8a" d="M12 6c3.79 0 7.17 2.13 8.82 5.5C19.17 14.87 15.79 17 12 17s-7.17-2.13-8.82-5.5C4.83 8.13 8.21 6 12 6m0-2C7 4 2.73 7.11 1 11.5 2.73 15.89 7 19 12 19s9.27-3.11 11-7.5C21.27 7.11 17 4 12 4zm0 5c1.38 0 2.5 1.12 2.5 2.5S13.38 14 12 14s-2.5-1.12-2.5-2.5S10.62 9 12 9m0-2c-2.48 0-4.5 2.02-4.5 4.5S9.52 16 12 16s4.5-2.02 4.5-4.5S14.48 7 12 7z"/></svg><svg class="abs" style="left:2596.7px;top:664px" width="40" height="40" viewBox="0 0 24 24"><path fill="#8a8a8a" d="M16 1H4c-1.1 0-2 .9-2 2v14h2V3h12V1zm3 4H8c-1.1 0-2 .9-2 2v14c0 1.1.9 2 2 2h11c1.1 0 2-.9 2-2V7c0-1.1-.9-2-2-2zm0 16H8V7h11v14z"/></svg><svg class="abs" style="left:2669.3px;top:664px" width="40" height="40" viewBox="0 0 24 24"><path fill="#f0ad3c" d="M13 3c-4.97 0-9 4.03-9 9H1l3.89 3.89.07.14L9 12H6c0-3.87 3.13-7 7-7s7 3.13 7 7-3.13 7-7 7c-1.93 0-3.68-.79-4.94-2.06l-1.42 1.42C8.27 19.99 10.51 21 13 21c4.97 0 9-4.03 9-9s-4.03-9-9-9zm-1 5v5l4.28 2.54.72-1.21-3.5-2.08V8H12z"/></svg><svg class="abs" style="left:2740.7px;top:664px" width="40" height="40" viewBox="0 0 24 24"><rect x="2" y="20" width="20" height="4" fill="#3b78f5"/><path d="M4.6 17 V13.9 L13.5 5 L16.6 8.1 L7.7 17 Z" fill="none" stroke="#3b78f5" stroke-width="1.9" stroke-linejoin="round"/><path d="M15.3 3.2 L17 1.5 C17.4 1.1 18 1.1 18.4 1.5 L20.1 3.2 C20.5 3.6 20.5 4.2 20.1 4.6 L18.4 6.3 Z" fill="#3b78f5"/></svg><div class="abs" style="left:170px;top:842px;width:2710px;height:2px;background:#eeeeee"></div><div class="abs t" style="left:217.70px;top:775.22px;font-size:29.5px;line-height:29.5px;font-weight:normal;color:#212121;letter-spacing:-0.238px;">For IT Department</div><svg class="abs" style="left:737px;top:759px" width="48" height="48" viewBox="0 0 24 24"><path fill="#8a8a8a" d="M15.5 1h-8C6.12 1 5 2.12 5 3.5v17C5 21.88 6.12 23 7.5 23h8c1.38 0 2.5-1.12 2.5-2.5v-17C18 2.12 16.88 1 15.5 1zm-4 21c-.83 0-1.5-.67-1.5-1.5s.67-1.5 1.5-1.5 1.5.67 1.5 1.5-.67 1.5-1.5 1.5zm4.5-4H7V4h9v14z"/></svg><svg class="abs" style="left:801px;top:759px" width="48" height="48" viewBox="0 0 24 24"><path fill="#8a8a8a" d="M20 18c1.1 0 1.99-.9 1.99-2L22 6c0-1.1-.9-2-2-2H4c-1.1 0-2 .9-2 2v10c0 1.1.9 2 2 2H0v2h24v-2h-4zM4 6h16v10H4V6z"/></svg><svg class="abs" style="left:865px;top:759px" width="48" height="48" viewBox="0 0 24 24"><path fill="#8a8a8a" d="M17.81 4.47c-.08 0-.16-.02-.23-.06C15.66 3.42 14 3 12.01 3c-1.98 0-3.86.47-5.57 1.41-.24.13-.54.04-.68-.2-.13-.24-.04-.55.2-.68C7.82 2.52 9.86 2 12.01 2c2.14 0 3.99.47 6.02 1.52.25.13.34.43.21.67-.09.18-.26.28-.43.28zM3.5 9.72c-.1 0-.2-.03-.29-.09-.23-.16-.28-.47-.12-.7.99-1.4 2.25-2.5 3.75-3.27C9.98 4.04 14 4.03 17.15 5.65c1.5.77 2.76 1.86 3.75 3.25.16.22.11.54-.12.7-.23.16-.54.11-.7-.12-.9-1.26-2.04-2.25-3.39-2.94-2.87-1.47-6.54-1.47-9.4.01-1.36.7-2.5 1.7-3.4 2.96-.08.14-.23.21-.39.21zm6.25 12.07c-.13 0-.26-.05-.35-.15-.87-.87-1.34-1.43-2.01-2.64-.69-1.23-1.05-2.73-1.05-4.34 0-2.97 2.54-5.39 5.66-5.39s5.66 2.42 5.66 5.39c0 .28-.22.5-.5.5s-.5-.22-.5-.5c0-2.42-2.09-4.39-4.66-4.39-2.57 0-4.66 1.97-4.66 4.39 0 1.44.32 2.77.93 3.85.64 1.15 1.08 1.64 1.85 2.42.19.2.19.51 0 .71-.11.1-.24.15-.37.15zm7.17-1.85c-1.19 0-2.24-.3-3.1-.89-1.49-1.01-2.38-2.65-2.38-4.39 0-.28.22-.5.5-.5s.5.22.5.5c0 1.41.72 2.74 1.94 3.56.71.48 1.54.71 2.54.71.24 0 .64-.03 1.04-.1.27-.05.53.13.58.41.05.27-.13.53-.41.58-.57.11-1.07.12-1.21.12zM14.91 22c-.04 0-.09-.01-.13-.02-1.59-.44-2.63-1.03-3.72-2.1-1.4-1.39-2.17-3.24-2.17-5.22 0-1.62 1.38-2.94 3.08-2.94 1.7 0 3.08 1.32 3.08 2.94 0 1.07.93 1.94 2.08 1.94s2.08-.87 2.08-1.94c0-3.77-3.25-6.83-7.25-6.83-2.84 0-5.44 1.58-6.61 4.03-.39.81-.59 1.76-.59 2.8 0 .78.07 2.01.67 3.61.1.26-.03.55-.29.64-.26.1-.55-.04-.64-.29-.49-1.31-.73-2.61-.73-3.96 0-1.2.23-2.290.68-3.24 1.33-2.79 4.28-4.6 7.51-4.6 4.55 0 8.25 3.51 8.25 7.83 0 1.62-1.38 2.94-3.08 2.94s-3.080-1.32-3.08-2.94c0-1.07-.93-1.94-2.08-1.94s-2.08.87-2.08 1.94c0 1.71.66 3.31 1.87 4.51.95.94 1.86 1.46 3.27 1.85.27.07.42.35.35.61-.05.23-.26.38-.47.38z"/></svg><div class="abs t" style="left:1196.40px;top:775.22px;font-size:29.5px;line-height:29.5px;font-weight:normal;color:#212121;letter-spacing:0.156px;">Total working hours</div><div class="abs" style="left:1840px;top:766px;width:115px;height:48px;background:#f6ffed;border-radius:9px"></div><div class="abs t" style="left:1852.60px;top:776.35px;font-size:25.5px;line-height:25.5px;font-weight:normal;color:#5bbd38;letter-spacing:0.150px;">Allowed</div><div class="abs t" style="left:2136.60px;top:775.22px;font-size:29.5px;line-height:29.5px;font-weight:normal;color:#212121;letter-spacing:-0.300px;">Monday</div><svg class="abs" style="left:2449px;top:766px" width="48" height="48" viewBox="0 0 24 24"><path fill="#8a8a8a" d="M4 13c1.1 0 2-.9 2-2s-.9-2-2-2-2 .9-2 2 .9 2 2 2zm1.13 1.1c-.37-.06-.74-.1-1.13-.1-.99 0-1.93.21-2.78.58C.48 14.9 0 15.62 0 16.43V18h4.5v-1.61c0-.83.23-1.61.63-2.29zM20 13c1.1 0 2-.9 2-2s-.9-2-2-2-2 .9-2 2 .9 2 2 2zm4 3.43c0-.81-.48-1.53-1.22-1.85-.85-.37-1.79-.58-2.78-.58-.39 0-.76.04-1.13.1.4.68.63 1.46.63 2.29V18H24v-1.57zm-7.76-2.78c-1.17-.52-2.61-.9-4.24-.9-1.63 0-3.07.39-4.24.9C6.68 14.13 6 15.21 6 16.39V18h12v-1.61c0-1.18-.68-2.26-1.76-2.74zM8.07 16c.09-.23.13-.39.91-.69.97-.38 1.99-.56 3.02-.56s2.05.18 3.02.56c.77.3.81.46.91.69H8.07zM12 8c.55 0 1 .45 1 1s-.45 1-1 1-1-.45-1-1 .45-1 1-1m0-2c-1.66 0-3 1.34-3 3s1.34 3 3 3 3-1.34 3-3-1.34-3-3-3z"/></svg><svg class="abs" style="left:2525.3px;top:770px" width="40" height="40" viewBox="0 0 24 24"><path fill="#8a8a8a" d="M12 6c3.79 0 7.17 2.13 8.82 5.5C19.17 14.87 15.79 17 12 17s-7.17-2.13-8.82-5.5C4.83 8.13 8.21 6 12 6m0-2C7 4 2.73 7.11 1 11.5 2.73 15.89 7 19 12 19s9.27-3.11 11-7.5C21.27 7.11 17 4 12 4zm0 5c1.38 0 2.5 1.12 2.5 2.5S13.38 14 12 14s-2.5-1.12-2.5-2.5S10.62 9 12 9m0-2c-2.48 0-4.5 2.02-4.5 4.5S9.52 16 12 16s4.5-2.02 4.5-4.5S14.48 7 12 7z"/></svg><svg class="abs" style="left:2596.7px;top:770px" width="40" height="40" viewBox="0 0 24 24"><path fill="#8a8a8a" d="M16 1H4c-1.1 0-2 .9-2 2v14h2V3h12V1zm3 4H8c-1.1 0-2 .9-2 2v14c0 1.1.9 2 2 2h11c1.1 0 2-.9 2-2V7c0-1.1-.9-2-2-2zm0 16H8V7h11v14z"/></svg><svg class="abs" style="left:2669.3px;top:770px" width="40" height="40" viewBox="0 0 24 24"><path fill="#f0ad3c" d="M13 3c-4.97 0-9 4.03-9 9H1l3.89 3.89.07.14L9 12H6c0-3.87 3.13-7 7-7s7 3.13 7 7-3.13 7-7 7c-1.93 0-3.68-.79-4.94-2.06l-1.42 1.42C8.27 19.99 10.51 21 13 21c4.97 0 9-4.03 9-9s-4.03-9-9-9zm-1 5v5l4.28 2.54.72-1.21-3.5-2.08V8H12z"/></svg><svg class="abs" style="left:2740.7px;top:770px" width="40" height="40" viewBox="0 0 24 24"><rect x="2" y="20" width="20" height="4" fill="#3b78f5"/><path d="M4.6 17 V13.9 L13.5 5 L16.6 8.1 L7.7 17 Z" fill="none" stroke="#3b78f5" stroke-width="1.9" stroke-linejoin="round"/><path d="M15.3 3.2 L17 1.5 C17.4 1.1 18 1.1 18.4 1.5 L20.1 3.2 C20.5 3.6 20.5 4.2 20.1 4.6 L18.4 6.3 Z" fill="#3b78f5"/></svg><div class="abs" style="left:170px;top:948px;width:2710px;height:2px;background:#eeeeee"></div><div class="abs t" style="left:218.70px;top:881.22px;font-size:29.5px;line-height:29.5px;font-weight:normal;color:#212121;letter-spacing:-0.177px;">Special Policy</div><svg class="abs" style="left:737px;top:865px" width="48" height="48" viewBox="0 0 24 24"><path fill="#8a8a8a" d="M15.5 1h-8C6.12 1 5 2.12 5 3.5v17C5 21.88 6.12 23 7.5 23h8c1.38 0 2.5-1.12 2.5-2.5v-17C18 2.12 16.88 1 15.5 1zm-4 21c-.83 0-1.5-.67-1.5-1.5s.67-1.5 1.5-1.5 1.5.67 1.5 1.5-.67 1.5-1.5 1.5zm4.5-4H7V4h9v14z"/></svg><div class="abs t" style="left:1196.40px;top:881.22px;font-size:29.5px;line-height:29.5px;font-weight:normal;color:#212121;letter-spacing:0.156px;">Total working hours</div><div class="abs" style="left:1840px;top:872px;width:115px;height:48px;background:#f6ffed;border-radius:9px"></div><div class="abs t" style="left:1852.60px;top:882.35px;font-size:25.5px;line-height:25.5px;font-weight:normal;color:#5bbd38;letter-spacing:0.150px;">Allowed</div><div class="abs t" style="left:2136.60px;top:881.22px;font-size:29.5px;line-height:29.5px;font-weight:normal;color:#212121;letter-spacing:-0.300px;">Monday</div><svg class="abs" style="left:2449px;top:872px" width="48" height="48" viewBox="0 0 24 24"><path fill="#8a8a8a" d="M4 13c1.1 0 2-.9 2-2s-.9-2-2-2-2 .9-2 2 .9 2 2 2zm1.13 1.1c-.37-.06-.74-.1-1.13-.1-.99 0-1.93.21-2.78.58C.48 14.9 0 15.62 0 16.43V18h4.5v-1.61c0-.83.23-1.61.63-2.29zM20 13c1.1 0 2-.9 2-2s-.9-2-2-2-2 .9-2 2 .9 2 2 2zm4 3.43c0-.81-.48-1.53-1.22-1.85-.85-.37-1.79-.58-2.78-.58-.39 0-.76.04-1.13.1.4.68.63 1.46.63 2.29V18H24v-1.57zm-7.76-2.78c-1.17-.52-2.61-.9-4.24-.9-1.63 0-3.07.39-4.24.9C6.68 14.13 6 15.21 6 16.39V18h12v-1.61c0-1.18-.68-2.26-1.76-2.74zM8.07 16c.09-.23.13-.39.91-.69.97-.38 1.99-.56 3.02-.56s2.05.18 3.02.56c.77.3.81.46.91.69H8.07zM12 8c.55 0 1 .45 1 1s-.45 1-1 1-1-.45-1-1 .45-1 1-1m0-2c-1.66 0-3 1.34-3 3s1.34 3 3 3 3-1.34 3-3-1.34-3-3-3z"/></svg><svg class="abs" style="left:2525.3px;top:876px" width="40" height="40" viewBox="0 0 24 24"><path fill="#8a8a8a" d="M12 6c3.79 0 7.17 2.13 8.82 5.5C19.17 14.87 15.79 17 12 17s-7.17-2.13-8.82-5.5C4.83 8.13 8.21 6 12 6m0-2C7 4 2.73 7.11 1 11.5 2.73 15.89 7 19 12 19s9.27-3.11 11-7.5C21.27 7.11 17 4 12 4zm0 5c1.38 0 2.5 1.12 2.5 2.5S13.38 14 12 14s-2.5-1.12-2.5-2.5S10.62 9 12 9m0-2c-2.48 0-4.5 2.02-4.5 4.5S9.52 16 12 16s4.5-2.02 4.5-4.5S14.48 7 12 7z"/></svg><svg class="abs" style="left:2596.7px;top:876px" width="40" height="40" viewBox="0 0 24 24"><path fill="#8a8a8a" d="M16 1H4c-1.1 0-2 .9-2 2v14h2V3h12V1zm3 4H8c-1.1 0-2 .9-2 2v14c0 1.1.9 2 2 2h11c1.1 0 2-.9 2-2V7c0-1.1-.9-2-2-2zm0 16H8V7h11v14z"/></svg><svg class="abs" style="left:2669.3px;top:876px" width="40" height="40" viewBox="0 0 24 24"><path fill="#f0ad3c" d="M13 3c-4.97 0-9 4.03-9 9H1l3.89 3.89.07.14L9 12H6c0-3.87 3.13-7 7-7s7 3.13 7 7-3.13 7-7 7c-1.93 0-3.68-.79-4.94-2.06l-1.42 1.42C8.27 19.99 10.51 21 13 21c4.97 0 9-4.03 9-9s-4.03-9-9-9zm-1 5v5l4.28 2.54.72-1.21-3.5-2.08V8H12z"/></svg><svg class="abs" style="left:2740.7px;top:876px" width="40" height="40" viewBox="0 0 24 24"><rect x="2" y="20" width="20" height="4" fill="#3b78f5"/><path d="M4.6 17 V13.9 L13.5 5 L16.6 8.1 L7.7 17 Z" fill="none" stroke="#3b78f5" stroke-width="1.9" stroke-linejoin="round"/><path d="M15.3 3.2 L17 1.5 C17.4 1.1 18 1.1 18.4 1.5 L20.1 3.2 C20.5 3.6 20.5 4.2 20.1 4.6 L18.4 6.3 Z" fill="#3b78f5"/></svg><div class="abs" style="left:170px;top:1054px;width:2710px;height:2px;background:#eeeeee"></div><div class="abs t" style="left:218.70px;top:987.22px;font-size:29.5px;line-height:29.5px;font-weight:normal;color:#212121;letter-spacing:-0.143px;">Copy Of Default Policy 2</div><svg class="abs" style="left:737px;top:971px" width="48" height="48" viewBox="0 0 24 24"><path fill="#8a8a8a" d="M15.5 1h-8C6.12 1 5 2.12 5 3.5v17C5 21.88 6.12 23 7.5 23h8c1.38 0 2.5-1.12 2.5-2.5v-17C18 2.12 16.88 1 15.5 1zm-4 21c-.83 0-1.5-.67-1.5-1.5s.67-1.5 1.5-1.5 1.5.67 1.5 1.5-.67 1.5-1.5 1.5zm4.5-4H7V4h9v14z"/></svg><svg class="abs" style="left:801px;top:971px" width="48" height="48" viewBox="0 0 24 24"><path fill="#8a8a8a" d="M20 18c1.1 0 1.99-.9 1.99-2L22 6c0-1.1-.9-2-2-2H4c-1.1 0-2 .9-2 2v10c0 1.1.9 2 2 2H0v2h24v-2h-4zM4 6h16v10H4V6z"/></svg><div class="abs t" style="left:1196.40px;top:987.22px;font-size:29.5px;line-height:29.5px;font-weight:normal;color:#212121;letter-spacing:0.156px;">Total working hours</div><div class="abs" style="left:1840px;top:978px;width:115px;height:48px;background:#f6ffed;border-radius:9px"></div><div class="abs t" style="left:1852.60px;top:988.35px;font-size:25.5px;line-height:25.5px;font-weight:normal;color:#5bbd38;letter-spacing:0.150px;">Allowed</div><div class="abs t" style="left:2136.60px;top:987.22px;font-size:29.5px;line-height:29.5px;font-weight:normal;color:#212121;letter-spacing:-0.300px;">Monday</div><svg class="abs" style="left:2449px;top:978px" width="48" height="48" viewBox="0 0 24 24"><path fill="#8a8a8a" d="M4 13c1.1 0 2-.9 2-2s-.9-2-2-2-2 .9-2 2 .9 2 2 2zm1.13 1.1c-.37-.06-.74-.1-1.13-.1-.99 0-1.93.21-2.78.58C.48 14.9 0 15.62 0 16.43V18h4.5v-1.61c0-.83.23-1.61.63-2.29zM20 13c1.1 0 2-.9 2-2s-.9-2-2-2-2 .9-2 2 .9 2 2 2zm4 3.43c0-.81-.48-1.53-1.22-1.85-.85-.37-1.79-.58-2.78-.58-.39 0-.76.04-1.13.1.4.68.63 1.46.63 2.29V18H24v-1.57zm-7.76-2.78c-1.17-.52-2.61-.9-4.24-.9-1.63 0-3.07.39-4.24.9C6.68 14.13 6 15.21 6 16.39V18h12v-1.61c0-1.18-.68-2.26-1.76-2.74zM8.07 16c.09-.23.13-.39.91-.69.97-.38 1.99-.56 3.02-.56s2.05.18 3.02.56c.77.3.81.46.91.69H8.07zM12 8c.55 0 1 .45 1 1s-.45 1-1 1-1-.45-1-1 .45-1 1-1m0-2c-1.66 0-3 1.34-3 3s1.34 3 3 3 3-1.34 3-3-1.34-3-3-3z"/></svg><svg class="abs" style="left:2525.3px;top:982px" width="40" height="40" viewBox="0 0 24 24"><path fill="#8a8a8a" d="M12 6c3.79 0 7.17 2.13 8.82 5.5C19.17 14.87 15.79 17 12 17s-7.17-2.13-8.82-5.5C4.83 8.13 8.21 6 12 6m0-2C7 4 2.73 7.11 1 11.5 2.73 15.89 7 19 12 19s9.27-3.11 11-7.5C21.27 7.11 17 4 12 4zm0 5c1.38 0 2.5 1.12 2.5 2.5S13.38 14 12 14s-2.5-1.12-2.5-2.5S10.62 9 12 9m0-2c-2.48 0-4.5 2.02-4.5 4.5S9.52 16 12 16s4.5-2.02 4.5-4.5S14.48 7 12 7z"/></svg><svg class="abs" style="left:2596.7px;top:982px" width="40" height="40" viewBox="0 0 24 24"><path fill="#8a8a8a" d="M16 1H4c-1.1 0-2 .9-2 2v14h2V3h12V1zm3 4H8c-1.1 0-2 .9-2 2v14c0 1.1.9 2 2 2h11c1.1 0 2-.9 2-2V7c0-1.1-.9-2-2-2zm0 16H8V7h11v14z"/></svg><svg class="abs" style="left:2669.3px;top:982px" width="40" height="40" viewBox="0 0 24 24"><path fill="#f0ad3c" d="M13 3c-4.97 0-9 4.03-9 9H1l3.89 3.89.07.14L9 12H6c0-3.87 3.13-7 7-7s7 3.13 7 7-3.13 7-7 7c-1.93 0-3.68-.79-4.94-2.06l-1.42 1.42C8.27 19.99 10.51 21 13 21c4.97 0 9-4.03 9-9s-4.03-9-9-9zm-1 5v5l4.28 2.54.72-1.21-3.5-2.08V8H12z"/></svg><svg class="abs" style="left:2740.7px;top:982px" width="40" height="40" viewBox="0 0 24 24"><rect x="2" y="20" width="20" height="4" fill="#3b78f5"/><path d="M4.6 17 V13.9 L13.5 5 L16.6 8.1 L7.7 17 Z" fill="none" stroke="#3b78f5" stroke-width="1.9" stroke-linejoin="round"/><path d="M15.3 3.2 L17 1.5 C17.4 1.1 18 1.1 18.4 1.5 L20.1 3.2 C20.5 3.6 20.5 4.2 20.1 4.6 L18.4 6.3 Z" fill="#3b78f5"/></svg><div class="abs" style="left:170px;top:1160px;width:2710px;height:2px;background:#eeeeee"></div><div class="abs t" style="left:217.70px;top:1093.22px;font-size:29.5px;line-height:29.5px;font-weight:normal;color:#212121;letter-spacing:0.047px;">Default Policy 2</div><svg class="abs" style="left:737px;top:1077px" width="48" height="48" viewBox="0 0 24 24"><path fill="#8a8a8a" d="M15.5 1h-8C6.12 1 5 2.12 5 3.5v17C5 21.88 6.12 23 7.5 23h8c1.38 0 2.5-1.12 2.5-2.5v-17C18 2.12 16.88 1 15.5 1zm-4 21c-.83 0-1.5-.67-1.5-1.5s.67-1.5 1.5-1.5 1.5.67 1.5 1.5-.67 1.5-1.5 1.5zm4.5-4H7V4h9v14z"/></svg><div class="abs t" style="left:1196.40px;top:1093.22px;font-size:29.5px;line-height:29.5px;font-weight:normal;color:#212121;letter-spacing:0.156px;">Total working hours</div><div class="abs" style="left:1840px;top:1084px;width:115px;height:48px;background:#f6ffed;border-radius:9px"></div><div class="abs t" style="left:1852.60px;top:1094.35px;font-size:25.5px;line-height:25.5px;font-weight:normal;color:#5bbd38;letter-spacing:0.150px;">Allowed</div><div class="abs t" style="left:2136.60px;top:1093.22px;font-size:29.5px;line-height:29.5px;font-weight:normal;color:#212121;letter-spacing:-0.300px;">Monday</div><svg class="abs" style="left:2449px;top:1084px" width="48" height="48" viewBox="0 0 24 24"><path fill="#8a8a8a" d="M4 13c1.1 0 2-.9 2-2s-.9-2-2-2-2 .9-2 2 .9 2 2 2zm1.13 1.1c-.37-.06-.74-.1-1.13-.1-.99 0-1.93.21-2.78.58C.48 14.9 0 15.62 0 16.43V18h4.5v-1.61c0-.83.23-1.61.63-2.29zM20 13c1.1 0 2-.9 2-2s-.9-2-2-2-2 .9-2 2 .9 2 2 2zm4 3.43c0-.81-.48-1.53-1.22-1.85-.85-.37-1.79-.58-2.78-.58-.39 0-.76.04-1.13.1.4.68.63 1.46.63 2.29V18H24v-1.57zm-7.76-2.78c-1.17-.52-2.61-.9-4.24-.9-1.63 0-3.07.39-4.24.9C6.68 14.13 6 15.21 6 16.39V18h12v-1.61c0-1.18-.68-2.26-1.76-2.74zM8.07 16c.09-.23.13-.39.91-.69.97-.38 1.99-.56 3.02-.56s2.05.18 3.02.56c.77.3.81.46.91.69H8.07zM12 8c.55 0 1 .45 1 1s-.45 1-1 1-1-.45-1-1 .45-1 1-1m0-2c-1.66 0-3 1.34-3 3s1.34 3 3 3 3-1.34 3-3-1.34-3-3-3z"/></svg><svg class="abs" style="left:2525.3px;top:1088px" width="40" height="40" viewBox="0 0 24 24"><path fill="#8a8a8a" d="M12 6c3.79 0 7.17 2.13 8.82 5.5C19.17 14.87 15.79 17 12 17s-7.17-2.13-8.82-5.5C4.83 8.13 8.21 6 12 6m0-2C7 4 2.73 7.11 1 11.5 2.73 15.89 7 19 12 19s9.27-3.11 11-7.5C21.27 7.11 17 4 12 4zm0 5c1.38 0 2.5 1.12 2.5 2.5S13.38 14 12 14s-2.5-1.12-2.5-2.5S10.62 9 12 9m0-2c-2.48 0-4.5 2.02-4.5 4.5S9.52 16 12 16s4.5-2.02 4.5-4.5S14.48 7 12 7z"/></svg><svg class="abs" style="left:2596.7px;top:1088px" width="40" height="40" viewBox="0 0 24 24"><path fill="#8a8a8a" d="M16 1H4c-1.1 0-2 .9-2 2v14h2V3h12V1zm3 4H8c-1.1 0-2 .9-2 2v14c0 1.1.9 2 2 2h11c1.1 0 2-.9 2-2V7c0-1.1-.9-2-2-2zm0 16H8V7h11v14z"/></svg><svg class="abs" style="left:2669.3px;top:1088px" width="40" height="40" viewBox="0 0 24 24"><path fill="#f0ad3c" d="M13 3c-4.97 0-9 4.03-9 9H1l3.89 3.89.07.14L9 12H6c0-3.87 3.13-7 7-7s7 3.13 7 7-3.13 7-7 7c-1.93 0-3.68-.79-4.94-2.06l-1.42 1.42C8.27 19.99 10.51 21 13 21c4.97 0 9-4.03 9-9s-4.03-9-9-9zm-1 5v5l4.28 2.54.72-1.21-3.5-2.08V8H12z"/></svg><svg class="abs" style="left:2740.7px;top:1088px" width="40" height="40" viewBox="0 0 24 24"><rect x="2" y="20" width="20" height="4" fill="#3b78f5"/><path d="M4.6 17 V13.9 L13.5 5 L16.6 8.1 L7.7 17 Z" fill="none" stroke="#3b78f5" stroke-width="1.9" stroke-linejoin="round"/><path d="M15.3 3.2 L17 1.5 C17.4 1.1 18 1.1 18.4 1.5 L20.1 3.2 C20.5 3.6 20.5 4.2 20.1 4.6 L18.4 6.3 Z" fill="#3b78f5"/></svg><div class="abs" style="left:170px;top:1266px;width:2710px;height:2px;background:#eeeeee"></div><div class="abs t" style="left:218.70px;top:1199.22px;font-size:29.5px;line-height:29.5px;font-weight:normal;color:#212121;letter-spacing:-0.922px;">Copy Of QA</div><svg class="abs" style="left:737px;top:1183px" width="48" height="48" viewBox="0 0 24 24"><path fill="#8a8a8a" d="M15.5 1h-8C6.12 1 5 2.12 5 3.5v17C5 21.88 6.12 23 7.5 23h8c1.38 0 2.5-1.12 2.5-2.5v-17C18 2.12 16.88 1 15.5 1zm-4 21c-.83 0-1.5-.67-1.5-1.5s.67-1.5 1.5-1.5 1.5.67 1.5 1.5-.67 1.5-1.5 1.5zm4.5-4H7V4h9v14z"/></svg><svg class="abs" style="left:801px;top:1183px" width="48" height="48" viewBox="0 0 24 24"><path fill="#8a8a8a" d="M20 18c1.1 0 1.99-.9 1.99-2L22 6c0-1.1-.9-2-2-2H4c-1.1 0-2 .9-2 2v10c0 1.1.9 2 2 2H0v2h24v-2h-4zM4 6h16v10H4V6z"/></svg><svg class="abs" style="left:865px;top:1183px" width="48" height="48" viewBox="0 0 24 24"><path fill="#8a8a8a" d="M17.81 4.47c-.08 0-.16-.02-.23-.06C15.66 3.42 14 3 12.01 3c-1.98 0-3.86.47-5.57 1.41-.24.13-.54.04-.68-.2-.13-.24-.04-.55.2-.68C7.82 2.52 9.86 2 12.01 2c2.14 0 3.99.47 6.02 1.52.25.13.34.43.21.67-.09.18-.26.28-.43.28zM3.5 9.72c-.1 0-.2-.03-.29-.09-.23-.16-.28-.47-.12-.7.99-1.4 2.25-2.5 3.75-3.27C9.98 4.04 14 4.03 17.15 5.65c1.5.77 2.76 1.86 3.75 3.25.16.22.11.54-.12.7-.23.16-.54.11-.7-.12-.9-1.26-2.04-2.25-3.39-2.94-2.87-1.47-6.54-1.47-9.4.01-1.36.7-2.5 1.7-3.4 2.96-.08.14-.23.21-.39.21zm6.25 12.07c-.13 0-.26-.05-.35-.15-.87-.87-1.34-1.43-2.01-2.64-.69-1.23-1.05-2.73-1.05-4.34 0-2.97 2.54-5.39 5.66-5.39s5.66 2.42 5.66 5.39c0 .28-.22.5-.5.5s-.5-.22-.5-.5c0-2.42-2.09-4.39-4.66-4.39-2.57 0-4.66 1.97-4.66 4.39 0 1.44.32 2.77.93 3.85.64 1.15 1.08 1.64 1.85 2.42.19.2.19.51 0 .71-.11.1-.24.15-.37.15zm7.17-1.85c-1.19 0-2.24-.3-3.1-.89-1.49-1.01-2.38-2.65-2.38-4.39 0-.28.22-.5.5-.5s.5.22.5.5c0 1.41.72 2.74 1.94 3.56.71.48 1.54.71 2.54.71.24 0 .64-.03 1.04-.1.27-.05.53.13.58.41.05.27-.13.53-.41.58-.57.11-1.07.12-1.21.12zM14.91 22c-.04 0-.09-.01-.13-.02-1.59-.44-2.63-1.03-3.72-2.1-1.4-1.39-2.17-3.24-2.17-5.22 0-1.62 1.38-2.94 3.08-2.94 1.7 0 3.08 1.32 3.08 2.94 0 1.07.93 1.94 2.08 1.94s2.08-.87 2.08-1.94c0-3.77-3.25-6.83-7.25-6.83-2.84 0-5.44 1.58-6.61 4.03-.39.81-.59 1.76-.59 2.8 0 .78.07 2.01.67 3.61.1.26-.03.55-.29.64-.26.1-.55-.04-.64-.29-.49-1.31-.73-2.61-.73-3.96 0-1.2.23-2.290.68-3.24 1.33-2.79 4.28-4.6 7.51-4.6 4.55 0 8.25 3.51 8.25 7.83 0 1.62-1.38 2.94-3.08 2.94s-3.080-1.32-3.08-2.94c0-1.07-.93-1.94-2.08-1.94s-2.08.87-2.08 1.94c0 1.71.66 3.31 1.87 4.51.95.94 1.86 1.46 3.27 1.85.27.07.42.35.35.61-.05.23-.26.38-.47.38z"/></svg><div class="abs t" style="left:1196.40px;top:1199.22px;font-size:29.5px;line-height:29.5px;font-weight:normal;color:#212121;letter-spacing:0.156px;">Total working hours</div><div class="abs" style="left:1840px;top:1190px;width:115px;height:48px;background:#f6ffed;border-radius:9px"></div><div class="abs t" style="left:1852.60px;top:1200.35px;font-size:25.5px;line-height:25.5px;font-weight:normal;color:#5bbd38;letter-spacing:0.150px;">Allowed</div><div class="abs t" style="left:2137.60px;top:1199.22px;font-size:29.5px;line-height:29.5px;font-weight:normal;color:#212121;letter-spacing:-0.280px;">Sunday</div><svg class="abs" style="left:2449px;top:1190px" width="48" height="48" viewBox="0 0 24 24"><path fill="#8a8a8a" d="M4 13c1.1 0 2-.9 2-2s-.9-2-2-2-2 .9-2 2 .9 2 2 2zm1.13 1.1c-.37-.06-.74-.1-1.13-.1-.99 0-1.93.21-2.78.58C.48 14.9 0 15.62 0 16.43V18h4.5v-1.61c0-.83.23-1.61.63-2.29zM20 13c1.1 0 2-.9 2-2s-.9-2-2-2-2 .9-2 2 .9 2 2 2zm4 3.43c0-.81-.48-1.53-1.22-1.85-.85-.37-1.79-.58-2.78-.58-.39 0-.76.04-1.13.1.4.68.63 1.46.63 2.29V18H24v-1.57zm-7.76-2.78c-1.17-.52-2.61-.9-4.24-.9-1.63 0-3.07.39-4.24.9C6.68 14.13 6 15.21 6 16.39V18h12v-1.61c0-1.18-.68-2.26-1.76-2.74zM8.07 16c.09-.23.13-.39.91-.69.97-.38 1.99-.56 3.02-.56s2.05.18 3.02.56c.77.3.81.46.91.69H8.07zM12 8c.55 0 1 .45 1 1s-.45 1-1 1-1-.45-1-1 .45-1 1-1m0-2c-1.66 0-3 1.34-3 3s1.34 3 3 3 3-1.34 3-3-1.34-3-3-3z"/></svg><svg class="abs" style="left:2525.3px;top:1194px" width="40" height="40" viewBox="0 0 24 24"><path fill="#8a8a8a" d="M12 6c3.79 0 7.17 2.13 8.82 5.5C19.17 14.87 15.79 17 12 17s-7.17-2.13-8.82-5.5C4.83 8.13 8.21 6 12 6m0-2C7 4 2.73 7.11 1 11.5 2.73 15.89 7 19 12 19s9.27-3.11 11-7.5C21.27 7.11 17 4 12 4zm0 5c1.38 0 2.5 1.12 2.5 2.5S13.38 14 12 14s-2.5-1.12-2.5-2.5S10.62 9 12 9m0-2c-2.48 0-4.5 2.02-4.5 4.5S9.52 16 12 16s4.5-2.02 4.5-4.5S14.48 7 12 7z"/></svg><svg class="abs" style="left:2596.7px;top:1194px" width="40" height="40" viewBox="0 0 24 24"><path fill="#8a8a8a" d="M16 1H4c-1.1 0-2 .9-2 2v14h2V3h12V1zm3 4H8c-1.1 0-2 .9-2 2v14c0 1.1.9 2 2 2h11c1.1 0 2-.9 2-2V7c0-1.1-.9-2-2-2zm0 16H8V7h11v14z"/></svg><svg class="abs" style="left:2669.3px;top:1194px" width="40" height="40" viewBox="0 0 24 24"><path fill="#f0ad3c" d="M13 3c-4.97 0-9 4.03-9 9H1l3.89 3.89.07.14L9 12H6c0-3.87 3.13-7 7-7s7 3.13 7 7-3.13 7-7 7c-1.93 0-3.68-.79-4.94-2.06l-1.42 1.42C8.27 19.99 10.51 21 13 21c4.97 0 9-4.03 9-9s-4.03-9-9-9zm-1 5v5l4.28 2.54.72-1.21-3.5-2.08V8H12z"/></svg><svg class="abs" style="left:2740.7px;top:1194px" width="40" height="40" viewBox="0 0 24 24"><rect x="2" y="20" width="20" height="4" fill="#3b78f5"/><path d="M4.6 17 V13.9 L13.5 5 L16.6 8.1 L7.7 17 Z" fill="none" stroke="#3b78f5" stroke-width="1.9" stroke-linejoin="round"/><path d="M15.3 3.2 L17 1.5 C17.4 1.1 18 1.1 18.4 1.5 L20.1 3.2 C20.5 3.6 20.5 4.2 20.1 4.6 L18.4 6.3 Z" fill="#3b78f5"/></svg><div class="abs" style="left:170px;top:1372px;width:2710px;height:2px;background:#eeeeee"></div><div class="abs t" style="left:217.70px;top:1305.22px;font-size:29.5px;line-height:29.5px;font-weight:normal;color:#212121;letter-spacing:-1.260px;">For QA</div><svg class="abs" style="left:737px;top:1289px" width="48" height="48" viewBox="0 0 24 24"><path fill="#8a8a8a" d="M15.5 1h-8C6.12 1 5 2.12 5 3.5v17C5 21.88 6.12 23 7.5 23h8c1.38 0 2.5-1.12 2.5-2.5v-17C18 2.12 16.88 1 15.5 1zm-4 21c-.83 0-1.5-.67-1.5-1.5s.67-1.5 1.5-1.5 1.5.67 1.5 1.5-.67 1.5-1.5 1.5zm4.5-4H7V4h9v14z"/></svg><svg class="abs" style="left:801px;top:1289px" width="48" height="48" viewBox="0 0 24 24"><path fill="#8a8a8a" d="M20 18c1.1 0 1.99-.9 1.99-2L22 6c0-1.1-.9-2-2-2H4c-1.1 0-2 .9-2 2v10c0 1.1.9 2 2 2H0v2h24v-2h-4zM4 6h16v10H4V6z"/></svg><svg class="abs" style="left:865px;top:1289px" width="48" height="48" viewBox="0 0 24 24"><path fill="#8a8a8a" d="M17.81 4.47c-.08 0-.16-.02-.23-.06C15.66 3.42 14 3 12.01 3c-1.98 0-3.86.47-5.57 1.41-.24.13-.54.04-.68-.2-.13-.24-.04-.55.2-.68C7.82 2.52 9.86 2 12.01 2c2.14 0 3.99.47 6.02 1.52.25.13.34.43.21.67-.09.18-.26.28-.43.28zM3.5 9.72c-.1 0-.2-.03-.29-.09-.23-.16-.28-.47-.12-.7.99-1.4 2.25-2.5 3.75-3.27C9.98 4.04 14 4.03 17.15 5.65c1.5.77 2.76 1.86 3.75 3.25.16.22.11.54-.12.7-.23.16-.54.11-.7-.12-.9-1.26-2.04-2.25-3.39-2.94-2.87-1.47-6.54-1.47-9.4.01-1.36.7-2.5 1.7-3.4 2.96-.08.14-.23.21-.39.21zm6.25 12.07c-.13 0-.26-.05-.35-.15-.87-.87-1.34-1.43-2.01-2.64-.69-1.23-1.05-2.73-1.05-4.34 0-2.97 2.54-5.39 5.66-5.39s5.66 2.42 5.66 5.39c0 .28-.22.5-.5.5s-.5-.22-.5-.5c0-2.42-2.09-4.39-4.66-4.39-2.57 0-4.66 1.97-4.66 4.39 0 1.44.32 2.77.93 3.85.64 1.15 1.08 1.64 1.85 2.42.19.2.19.51 0 .71-.11.1-.24.15-.37.15zm7.17-1.85c-1.19 0-2.24-.3-3.1-.89-1.49-1.01-2.38-2.65-2.38-4.39 0-.28.22-.5.5-.5s.5.22.5.5c0 1.41.72 2.74 1.94 3.56.71.48 1.54.71 2.54.71.24 0 .64-.03 1.04-.1.27-.05.53.13.58.41.05.27-.13.53-.41.58-.57.11-1.07.12-1.21.12zM14.91 22c-.04 0-.09-.01-.13-.02-1.59-.44-2.63-1.03-3.72-2.1-1.4-1.39-2.17-3.24-2.17-5.22 0-1.62 1.38-2.94 3.08-2.94 1.7 0 3.08 1.32 3.08 2.94 0 1.07.93 1.94 2.08 1.94s2.08-.87 2.08-1.94c0-3.77-3.25-6.83-7.25-6.83-2.84 0-5.44 1.58-6.61 4.03-.39.81-.59 1.76-.59 2.8 0 .78.07 2.01.67 3.61.1.26-.03.55-.29.64-.26.1-.55-.04-.64-.29-.49-1.31-.73-2.61-.73-3.96 0-1.2.23-2.290.68-3.24 1.33-2.79 4.28-4.6 7.51-4.6 4.55 0 8.25 3.51 8.25 7.83 0 1.62-1.38 2.94-3.08 2.94s-3.080-1.32-3.08-2.94c0-1.07-.93-1.94-2.08-1.94s-2.08.87-2.08 1.94c0 1.71.66 3.31 1.87 4.51.95.94 1.86 1.46 3.27 1.85.27.07.42.35.35.61-.05.23-.26.38-.47.38z"/></svg><div class="abs t" style="left:1196.40px;top:1305.22px;font-size:29.5px;line-height:29.5px;font-weight:normal;color:#212121;letter-spacing:0.156px;">Total working hours</div><div class="abs" style="left:1840px;top:1296px;width:115px;height:48px;background:#f6ffed;border-radius:9px"></div><div class="abs t" style="left:1852.60px;top:1306.35px;font-size:25.5px;line-height:25.5px;font-weight:normal;color:#5bbd38;letter-spacing:0.150px;">Allowed</div><div class="abs t" style="left:2137.60px;top:1305.22px;font-size:29.5px;line-height:29.5px;font-weight:normal;color:#212121;letter-spacing:-0.280px;">Sunday</div><svg class="abs" style="left:2449px;top:1296px" width="48" height="48" viewBox="0 0 24 24"><path fill="#8a8a8a" d="M4 13c1.1 0 2-.9 2-2s-.9-2-2-2-2 .9-2 2 .9 2 2 2zm1.13 1.1c-.37-.06-.74-.1-1.13-.1-.99 0-1.93.21-2.78.58C.48 14.9 0 15.62 0 16.43V18h4.5v-1.61c0-.83.23-1.61.63-2.29zM20 13c1.1 0 2-.9 2-2s-.9-2-2-2-2 .9-2 2 .9 2 2 2zm4 3.43c0-.81-.48-1.53-1.22-1.85-.85-.37-1.79-.58-2.78-.58-.39 0-.76.04-1.13.1.4.68.63 1.46.63 2.29V18H24v-1.57zm-7.76-2.78c-1.17-.52-2.61-.9-4.24-.9-1.63 0-3.07.39-4.24.9C6.68 14.13 6 15.21 6 16.39V18h12v-1.61c0-1.18-.68-2.26-1.76-2.74zM8.07 16c.09-.23.13-.39.91-.69.97-.38 1.99-.56 3.02-.56s2.05.18 3.02.56c.77.3.81.46.91.69H8.07zM12 8c.55 0 1 .45 1 1s-.45 1-1 1-1-.45-1-1 .45-1 1-1m0-2c-1.66 0-3 1.34-3 3s1.34 3 3 3 3-1.34 3-3-1.34-3-3-3z"/></svg><svg class="abs" style="left:2525.3px;top:1300px" width="40" height="40" viewBox="0 0 24 24"><path fill="#8a8a8a" d="M12 6c3.79 0 7.17 2.13 8.82 5.5C19.17 14.87 15.79 17 12 17s-7.17-2.13-8.82-5.5C4.83 8.13 8.21 6 12 6m0-2C7 4 2.73 7.11 1 11.5 2.73 15.89 7 19 12 19s9.27-3.11 11-7.5C21.27 7.11 17 4 12 4zm0 5c1.38 0 2.5 1.12 2.5 2.5S13.38 14 12 14s-2.5-1.12-2.5-2.5S10.62 9 12 9m0-2c-2.48 0-4.5 2.02-4.5 4.5S9.52 16 12 16s4.5-2.02 4.5-4.5S14.48 7 12 7z"/></svg><svg class="abs" style="left:2596.7px;top:1300px" width="40" height="40" viewBox="0 0 24 24"><path fill="#8a8a8a" d="M16 1H4c-1.1 0-2 .9-2 2v14h2V3h12V1zm3 4H8c-1.1 0-2 .9-2 2v14c0 1.1.9 2 2 2h11c1.1 0 2-.9 2-2V7c0-1.1-.9-2-2-2zm0 16H8V7h11v14z"/></svg><svg class="abs" style="left:2669.3px;top:1300px" width="40" height="40" viewBox="0 0 24 24"><path fill="#f0ad3c" d="M13 3c-4.97 0-9 4.03-9 9H1l3.89 3.89.07.14L9 12H6c0-3.87 3.13-7 7-7s7 3.13 7 7-3.13 7-7 7c-1.93 0-3.68-.79-4.94-2.06l-1.42 1.42C8.27 19.99 10.51 21 13 21c4.97 0 9-4.03 9-9s-4.03-9-9-9zm-1 5v5l4.28 2.54.72-1.21-3.5-2.08V8H12z"/></svg><svg class="abs" style="left:2740.7px;top:1300px" width="40" height="40" viewBox="0 0 24 24"><rect x="2" y="20" width="20" height="4" fill="#3b78f5"/><path d="M4.6 17 V13.9 L13.5 5 L16.6 8.1 L7.7 17 Z" fill="none" stroke="#3b78f5" stroke-width="1.9" stroke-linejoin="round"/><path d="M15.3 3.2 L17 1.5 C17.4 1.1 18 1.1 18.4 1.5 L20.1 3.2 C20.5 3.6 20.5 4.2 20.1 4.6 L18.4 6.3 Z" fill="#3b78f5"/></svg><div class="abs" style="left:170px;top:1478px;width:2710px;height:2px;background:#eeeeee"></div><div class="abs t" style="left:218.70px;top:1411.22px;font-size:29.5px;line-height:29.5px;font-weight:normal;color:#212121;letter-spacing:-0.071px;">Copy Of Attendance Details for Field</div><svg class="abs" style="left:737px;top:1395px" width="48" height="48" viewBox="0 0 24 24"><path fill="#8a8a8a" d="M15.5 1h-8C6.12 1 5 2.12 5 3.5v17C5 21.88 6.12 23 7.5 23h8c1.38 0 2.5-1.12 2.5-2.5v-17C18 2.12 16.88 1 15.5 1zm-4 21c-.83 0-1.5-.67-1.5-1.5s.67-1.5 1.5-1.5 1.5.67 1.5 1.5-.67 1.5-1.5 1.5zm4.5-4H7V4h9v14z"/></svg><svg class="abs" style="left:801px;top:1395px" width="48" height="48" viewBox="0 0 24 24"><path fill="#8a8a8a" d="M20 18c1.1 0 1.99-.9 1.99-2L22 6c0-1.1-.9-2-2-2H4c-1.1 0-2 .9-2 2v10c0 1.1.9 2 2 2H0v2h24v-2h-4zM4 6h16v10H4V6z"/></svg><svg class="abs" style="left:865px;top:1395px" width="48" height="48" viewBox="0 0 24 24"><path fill="#8a8a8a" d="M17.81 4.47c-.08 0-.16-.02-.23-.06C15.66 3.42 14 3 12.01 3c-1.98 0-3.86.47-5.57 1.41-.24.13-.54.04-.68-.2-.13-.24-.04-.55.2-.68C7.82 2.52 9.86 2 12.01 2c2.14 0 3.99.47 6.02 1.52.25.13.34.43.21.67-.09.18-.26.28-.43.28zM3.5 9.72c-.1 0-.2-.03-.29-.09-.23-.16-.28-.47-.12-.7.99-1.4 2.25-2.5 3.75-3.27C9.98 4.04 14 4.03 17.15 5.65c1.5.77 2.76 1.86 3.75 3.25.16.22.11.54-.12.7-.23.16-.54.11-.7-.12-.9-1.26-2.04-2.25-3.39-2.94-2.87-1.47-6.54-1.47-9.4.01-1.36.7-2.5 1.7-3.4 2.96-.08.14-.23.21-.39.21zm6.25 12.07c-.13 0-.26-.05-.35-.15-.87-.87-1.34-1.43-2.01-2.64-.69-1.23-1.05-2.73-1.05-4.34 0-2.97 2.54-5.39 5.66-5.39s5.66 2.42 5.66 5.39c0 .28-.22.5-.5.5s-.5-.22-.5-.5c0-2.42-2.09-4.39-4.66-4.39-2.57 0-4.66 1.97-4.66 4.39 0 1.44.32 2.77.93 3.85.64 1.15 1.08 1.64 1.85 2.42.19.2.19.51 0 .71-.11.1-.24.15-.37.15zm7.17-1.85c-1.19 0-2.24-.3-3.1-.89-1.49-1.01-2.38-2.65-2.38-4.39 0-.28.22-.5.5-.5s.5.22.5.5c0 1.41.72 2.74 1.94 3.56.71.48 1.54.71 2.54.71.24 0 .64-.03 1.04-.1.27-.05.53.13.58.41.05.27-.13.53-.41.58-.57.11-1.07.12-1.21.12zM14.91 22c-.04 0-.09-.01-.13-.02-1.59-.44-2.63-1.03-3.72-2.1-1.4-1.39-2.17-3.24-2.17-5.22 0-1.62 1.38-2.94 3.08-2.94 1.7 0 3.08 1.32 3.08 2.94 0 1.07.93 1.94 2.08 1.94s2.08-.87 2.08-1.94c0-3.77-3.25-6.83-7.25-6.83-2.84 0-5.44 1.58-6.61 4.03-.39.81-.59 1.76-.59 2.8 0 .78.07 2.01.67 3.61.1.26-.03.55-.29.64-.26.1-.55-.04-.64-.29-.49-1.31-.73-2.61-.73-3.96 0-1.2.23-2.290.68-3.24 1.33-2.79 4.28-4.6 7.51-4.6 4.55 0 8.25 3.51 8.25 7.83 0 1.62-1.38 2.94-3.08 2.94s-3.080-1.32-3.08-2.94c0-1.07-.93-1.94-2.08-1.94s-2.08.87-2.08 1.94c0 1.71.66 3.31 1.87 4.51.95.94 1.86 1.46 3.27 1.85.27.07.42.35.35.61-.05.23-.26.38-.47.38z"/></svg><div class="abs t" style="left:1196.40px;top:1411.22px;font-size:29.5px;line-height:29.5px;font-weight:normal;color:#212121;letter-spacing:0.156px;">Total working hours</div><div class="abs" style="left:1840px;top:1402px;width:115px;height:48px;background:#f6ffed;border-radius:9px"></div><div class="abs t" style="left:1852.60px;top:1412.35px;font-size:25.5px;line-height:25.5px;font-weight:normal;color:#5bbd38;letter-spacing:0.150px;">Allowed</div><div class="abs t" style="left:2136.60px;top:1411.22px;font-size:29.5px;line-height:29.5px;font-weight:normal;color:#212121;letter-spacing:-0.300px;">Monday</div><svg class="abs" style="left:2449px;top:1402px" width="48" height="48" viewBox="0 0 24 24"><path fill="#8a8a8a" d="M4 13c1.1 0 2-.9 2-2s-.9-2-2-2-2 .9-2 2 .9 2 2 2zm1.13 1.1c-.37-.06-.74-.1-1.13-.1-.99 0-1.93.21-2.78.58C.48 14.9 0 15.62 0 16.43V18h4.5v-1.61c0-.83.23-1.61.63-2.29zM20 13c1.1 0 2-.9 2-2s-.9-2-2-2-2 .9-2 2 .9 2 2 2zm4 3.43c0-.81-.48-1.53-1.22-1.85-.85-.37-1.79-.58-2.78-.58-.39 0-.76.04-1.13.1.4.68.63 1.46.63 2.29V18H24v-1.57zm-7.76-2.78c-1.17-.52-2.61-.9-4.24-.9-1.63 0-3.07.39-4.24.9C6.68 14.13 6 15.21 6 16.39V18h12v-1.61c0-1.18-.68-2.26-1.76-2.74zM8.07 16c.09-.23.13-.39.91-.69.97-.38 1.99-.56 3.02-.56s2.05.18 3.02.56c.77.3.81.46.91.69H8.07zM12 8c.55 0 1 .45 1 1s-.45 1-1 1-1-.45-1-1 .45-1 1-1m0-2c-1.66 0-3 1.34-3 3s1.34 3 3 3 3-1.34 3-3-1.34-3-3-3z"/></svg><svg class="abs" style="left:2525.3px;top:1406px" width="40" height="40" viewBox="0 0 24 24"><path fill="#8a8a8a" d="M12 6c3.79 0 7.17 2.13 8.82 5.5C19.17 14.87 15.79 17 12 17s-7.17-2.13-8.82-5.5C4.83 8.13 8.21 6 12 6m0-2C7 4 2.73 7.11 1 11.5 2.73 15.89 7 19 12 19s9.27-3.11 11-7.5C21.27 7.11 17 4 12 4zm0 5c1.38 0 2.5 1.12 2.5 2.5S13.38 14 12 14s-2.5-1.12-2.5-2.5S10.62 9 12 9m0-2c-2.48 0-4.5 2.02-4.5 4.5S9.52 16 12 16s4.5-2.02 4.5-4.5S14.48 7 12 7z"/></svg><svg class="abs" style="left:2596.7px;top:1406px" width="40" height="40" viewBox="0 0 24 24"><path fill="#8a8a8a" d="M16 1H4c-1.1 0-2 .9-2 2v14h2V3h12V1zm3 4H8c-1.1 0-2 .9-2 2v14c0 1.1.9 2 2 2h11c1.1 0 2-.9 2-2V7c0-1.1-.9-2-2-2zm0 16H8V7h11v14z"/></svg><svg class="abs" style="left:2669.3px;top:1406px" width="40" height="40" viewBox="0 0 24 24"><path fill="#f0ad3c" d="M13 3c-4.97 0-9 4.03-9 9H1l3.89 3.89.07.14L9 12H6c0-3.87 3.13-7 7-7s7 3.13 7 7-3.13 7-7 7c-1.93 0-3.68-.79-4.94-2.06l-1.42 1.42C8.27 19.99 10.51 21 13 21c4.97 0 9-4.03 9-9s-4.03-9-9-9zm-1 5v5l4.28 2.54.72-1.21-3.5-2.08V8H12z"/></svg><svg class="abs" style="left:2740.7px;top:1406px" width="40" height="40" viewBox="0 0 24 24"><rect x="2" y="20" width="20" height="4" fill="#3b78f5"/><path d="M4.6 17 V13.9 L13.5 5 L16.6 8.1 L7.7 17 Z" fill="none" stroke="#3b78f5" stroke-width="1.9" stroke-linejoin="round"/><path d="M15.3 3.2 L17 1.5 C17.4 1.1 18 1.1 18.4 1.5 L20.1 3.2 C20.5 3.6 20.5 4.2 20.1 4.6 L18.4 6.3 Z" fill="#3b78f5"/></svg><div class="abs" style="left:170px;top:1584px;width:2710px;height:2px;background:#eeeeee"></div><div class="abs t" style="left:219.70px;top:1517.22px;font-size:29.5px;line-height:29.5px;font-weight:normal;color:#212121;letter-spacing:-0.078px;">Attendance Details for Field</div><svg class="abs" style="left:737px;top:1501px" width="48" height="48" viewBox="0 0 24 24"><path fill="#8a8a8a" d="M15.5 1h-8C6.12 1 5 2.12 5 3.5v17C5 21.88 6.12 23 7.5 23h8c1.38 0 2.5-1.12 2.5-2.5v-17C18 2.12 16.88 1 15.5 1zm-4 21c-.83 0-1.5-.67-1.5-1.5s.67-1.5 1.5-1.5 1.5.67 1.5 1.5-.67 1.5-1.5 1.5zm4.5-4H7V4h9v14z"/></svg><svg class="abs" style="left:801px;top:1501px" width="48" height="48" viewBox="0 0 24 24"><path fill="#8a8a8a" d="M17.81 4.47c-.08 0-.16-.02-.23-.06C15.66 3.42 14 3 12.01 3c-1.98 0-3.86.47-5.57 1.41-.24.13-.54.04-.68-.2-.13-.24-.04-.55.2-.68C7.82 2.52 9.86 2 12.01 2c2.14 0 3.99.47 6.02 1.52.25.13.34.43.21.67-.09.18-.26.28-.43.28zM3.5 9.72c-.1 0-.2-.03-.29-.09-.23-.16-.28-.47-.12-.7.99-1.4 2.25-2.5 3.75-3.27C9.98 4.04 14 4.03 17.15 5.65c1.5.77 2.76 1.86 3.75 3.25.16.22.11.54-.12.7-.23.16-.54.11-.7-.12-.9-1.26-2.04-2.25-3.39-2.94-2.87-1.47-6.54-1.47-9.4.01-1.36.7-2.5 1.7-3.4 2.96-.08.14-.23.21-.39.21zm6.25 12.07c-.13 0-.26-.05-.35-.15-.87-.87-1.34-1.43-2.01-2.64-.69-1.23-1.05-2.73-1.05-4.34 0-2.97 2.54-5.39 5.66-5.39s5.66 2.42 5.66 5.39c0 .28-.22.5-.5.5s-.5-.22-.5-.5c0-2.42-2.09-4.39-4.66-4.39-2.57 0-4.66 1.97-4.66 4.39 0 1.44.32 2.77.93 3.85.64 1.15 1.08 1.64 1.85 2.42.19.2.19.51 0 .71-.11.1-.24.15-.37.15zm7.17-1.85c-1.19 0-2.24-.3-3.1-.89-1.49-1.01-2.38-2.65-2.38-4.39 0-.28.22-.5.5-.5s.5.22.5.5c0 1.41.72 2.74 1.94 3.56.71.48 1.54.71 2.54.71.24 0 .64-.03 1.04-.1.27-.05.53.13.58.41.05.27-.13.53-.41.58-.57.11-1.07.12-1.21.12zM14.91 22c-.04 0-.09-.01-.13-.02-1.59-.44-2.63-1.03-3.72-2.1-1.4-1.39-2.17-3.24-2.17-5.22 0-1.62 1.38-2.94 3.08-2.94 1.7 0 3.08 1.32 3.08 2.94 0 1.07.93 1.94 2.08 1.94s2.08-.87 2.08-1.94c0-3.77-3.25-6.83-7.25-6.83-2.84 0-5.44 1.58-6.61 4.03-.39.81-.59 1.76-.59 2.8 0 .78.07 2.01.67 3.61.1.26-.03.55-.29.64-.26.1-.55-.04-.64-.29-.49-1.31-.73-2.61-.73-3.96 0-1.2.23-2.290.68-3.24 1.33-2.79 4.28-4.6 7.51-4.6 4.55 0 8.25 3.51 8.25 7.83 0 1.62-1.38 2.94-3.08 2.94s-3.080-1.32-3.08-2.94c0-1.07-.93-1.94-2.08-1.94s-2.08.87-2.08 1.94c0 1.71.66 3.31 1.87 4.51.95.94 1.86 1.46 3.27 1.85.27.07.42.35.35.61-.05.23-.26.38-.47.38z"/></svg><div class="abs t" style="left:1196.40px;top:1517.22px;font-size:29.5px;line-height:29.5px;font-weight:normal;color:#212121;letter-spacing:0.156px;">Total working hours</div><div class="abs" style="left:1840px;top:1508px;width:115px;height:48px;background:#f6ffed;border-radius:9px"></div><div class="abs t" style="left:1852.60px;top:1518.35px;font-size:25.5px;line-height:25.5px;font-weight:normal;color:#5bbd38;letter-spacing:0.150px;">Allowed</div><div class="abs t" style="left:2136.60px;top:1517.22px;font-size:29.5px;line-height:29.5px;font-weight:normal;color:#212121;letter-spacing:-0.300px;">Monday</div><svg class="abs" style="left:2449px;top:1508px" width="48" height="48" viewBox="0 0 24 24"><path fill="#8a8a8a" d="M4 13c1.1 0 2-.9 2-2s-.9-2-2-2-2 .9-2 2 .9 2 2 2zm1.13 1.1c-.37-.06-.74-.1-1.13-.1-.99 0-1.93.21-2.78.58C.48 14.9 0 15.62 0 16.43V18h4.5v-1.61c0-.83.23-1.61.63-2.29zM20 13c1.1 0 2-.9 2-2s-.9-2-2-2-2 .9-2 2 .9 2 2 2zm4 3.43c0-.81-.48-1.53-1.22-1.85-.85-.37-1.79-.58-2.78-.58-.39 0-.76.04-1.13.1.4.68.63 1.46.63 2.29V18H24v-1.57zm-7.76-2.78c-1.17-.52-2.61-.9-4.24-.9-1.63 0-3.07.39-4.24.9C6.68 14.13 6 15.21 6 16.39V18h12v-1.61c0-1.18-.68-2.26-1.76-2.74zM8.07 16c.09-.23.13-.39.91-.69.97-.38 1.99-.56 3.02-.56s2.05.18 3.02.56c.77.3.81.46.91.69H8.07zM12 8c.55 0 1 .45 1 1s-.45 1-1 1-1-.45-1-1 .45-1 1-1m0-2c-1.66 0-3 1.34-3 3s1.34 3 3 3 3-1.34 3-3-1.34-3-3-3z"/></svg><svg class="abs" style="left:2525.3px;top:1512px" width="40" height="40" viewBox="0 0 24 24"><path fill="#8a8a8a" d="M12 6c3.79 0 7.17 2.13 8.82 5.5C19.17 14.87 15.79 17 12 17s-7.17-2.13-8.82-5.5C4.83 8.13 8.21 6 12 6m0-2C7 4 2.73 7.11 1 11.5 2.73 15.89 7 19 12 19s9.27-3.11 11-7.5C21.27 7.11 17 4 12 4zm0 5c1.38 0 2.5 1.12 2.5 2.5S13.38 14 12 14s-2.5-1.12-2.5-2.5S10.62 9 12 9m0-2c-2.48 0-4.5 2.02-4.5 4.5S9.52 16 12 16s4.5-2.02 4.5-4.5S14.48 7 12 7z"/></svg><svg class="abs" style="left:2596.7px;top:1512px" width="40" height="40" viewBox="0 0 24 24"><path fill="#8a8a8a" d="M16 1H4c-1.1 0-2 .9-2 2v14h2V3h12V1zm3 4H8c-1.1 0-2 .9-2 2v14c0 1.1.9 2 2 2h11c1.1 0 2-.9 2-2V7c0-1.1-.9-2-2-2zm0 16H8V7h11v14z"/></svg><svg class="abs" style="left:2669.3px;top:1512px" width="40" height="40" viewBox="0 0 24 24"><path fill="#f0ad3c" d="M13 3c-4.97 0-9 4.03-9 9H1l3.89 3.89.07.14L9 12H6c0-3.87 3.13-7 7-7s7 3.13 7 7-3.13 7-7 7c-1.93 0-3.68-.79-4.94-2.06l-1.42 1.42C8.27 19.99 10.51 21 13 21c4.97 0 9-4.03 9-9s-4.03-9-9-9zm-1 5v5l4.28 2.54.72-1.21-3.5-2.08V8H12z"/></svg><svg class="abs" style="left:2740.7px;top:1512px" width="40" height="40" viewBox="0 0 24 24"><rect x="2" y="20" width="20" height="4" fill="#3b78f5"/><path d="M4.6 17 V13.9 L13.5 5 L16.6 8.1 L7.7 17 Z" fill="none" stroke="#3b78f5" stroke-width="1.9" stroke-linejoin="round"/><path d="M15.3 3.2 L17 1.5 C17.4 1.1 18 1.1 18.4 1.5 L20.1 3.2 C20.5 3.6 20.5 4.2 20.1 4.6 L18.4 6.3 Z" fill="#3b78f5"/></svg><div class="abs t" style="left:217.70px;top:1623.22px;font-size:29.5px;line-height:29.5px;font-weight:normal;color:#212121;letter-spacing:-0.325px;">HQ policy</div><svg class="abs" style="left:737px;top:1607px" width="48" height="48" viewBox="0 0 24 24"><path fill="#8a8a8a" d="M15.5 1h-8C6.12 1 5 2.12 5 3.5v17C5 21.88 6.12 23 7.5 23h8c1.38 0 2.5-1.12 2.5-2.5v-17C18 2.12 16.88 1 15.5 1zm-4 21c-.83 0-1.5-.67-1.5-1.5s.67-1.5 1.5-1.5 1.5.67 1.5 1.5-.67 1.5-1.5 1.5zm4.5-4H7V4h9v14z"/></svg><svg class="abs" style="left:801px;top:1607px" width="48" height="48" viewBox="0 0 24 24"><path fill="#8a8a8a" d="M20 18c1.1 0 1.99-.9 1.99-2L22 6c0-1.1-.9-2-2-2H4c-1.1 0-2 .9-2 2v10c0 1.1.9 2 2 2H0v2h24v-2h-4zM4 6h16v10H4V6z"/></svg><svg class="abs" style="left:865px;top:1607px" width="48" height="48" viewBox="0 0 24 24"><path fill="#8a8a8a" d="M17.81 4.47c-.08 0-.16-.02-.23-.06C15.66 3.42 14 3 12.01 3c-1.98 0-3.86.47-5.57 1.41-.24.13-.54.04-.68-.2-.13-.24-.04-.55.2-.68C7.82 2.52 9.86 2 12.01 2c2.14 0 3.99.47 6.02 1.52.25.13.34.43.21.67-.09.18-.26.28-.43.28zM3.5 9.72c-.1 0-.2-.03-.29-.09-.23-.16-.28-.47-.12-.7.99-1.4 2.25-2.5 3.75-3.27C9.98 4.04 14 4.03 17.15 5.65c1.5.77 2.76 1.86 3.75 3.25.16.22.11.54-.12.7-.23.16-.54.11-.7-.12-.9-1.26-2.04-2.25-3.39-2.94-2.87-1.47-6.54-1.47-9.4.01-1.36.7-2.5 1.7-3.4 2.96-.08.14-.23.21-.39.21zm6.25 12.07c-.13 0-.26-.05-.35-.15-.87-.87-1.34-1.43-2.01-2.64-.69-1.23-1.05-2.73-1.05-4.34 0-2.97 2.54-5.39 5.66-5.39s5.66 2.42 5.66 5.39c0 .28-.22.5-.5.5s-.5-.22-.5-.5c0-2.42-2.09-4.39-4.66-4.39-2.57 0-4.66 1.97-4.66 4.39 0 1.44.32 2.77.93 3.85.64 1.15 1.08 1.64 1.85 2.42.19.2.19.51 0 .71-.11.1-.24.15-.37.15zm7.17-1.85c-1.19 0-2.24-.3-3.1-.89-1.49-1.01-2.38-2.65-2.38-4.39 0-.28.22-.5.5-.5s.5.22.5.5c0 1.41.72 2.74 1.94 3.56.71.48 1.54.71 2.54.71.24 0 .64-.03 1.04-.1.27-.05.53.13.58.41.05.27-.13.53-.41.58-.57.11-1.07.12-1.21.12zM14.91 22c-.04 0-.09-.01-.13-.02-1.59-.44-2.63-1.03-3.72-2.1-1.4-1.39-2.17-3.24-2.17-5.22 0-1.62 1.38-2.94 3.08-2.94 1.7 0 3.08 1.32 3.08 2.94 0 1.07.93 1.94 2.08 1.94s2.08-.87 2.08-1.94c0-3.77-3.25-6.83-7.25-6.83-2.84 0-5.44 1.58-6.61 4.03-.39.81-.59 1.76-.59 2.8 0 .78.07 2.01.67 3.61.1.26-.03.55-.29.64-.26.1-.55-.04-.64-.29-.49-1.31-.73-2.61-.73-3.96 0-1.2.23-2.290.68-3.24 1.33-2.79 4.28-4.6 7.51-4.6 4.55 0 8.25 3.51 8.25 7.83 0 1.62-1.38 2.94-3.08 2.94s-3.080-1.32-3.08-2.94c0-1.07-.93-1.94-2.08-1.94s-2.08.87-2.08 1.94c0 1.71.66 3.31 1.87 4.51.95.94 1.86 1.46 3.27 1.85.27.07.42.35.35.61-.05.23-.26.38-.47.38z"/></svg><div class="abs t" style="left:1196.40px;top:1623.22px;font-size:29.5px;line-height:29.5px;font-weight:normal;color:#212121;letter-spacing:0.156px;">Total working hours</div><div class="abs" style="left:1840px;top:1614px;width:115px;height:48px;background:#f6ffed;border-radius:9px"></div><div class="abs t" style="left:1852.60px;top:1624.35px;font-size:25.5px;line-height:25.5px;font-weight:normal;color:#5bbd38;letter-spacing:0.150px;">Allowed</div><div class="abs t" style="left:2136.60px;top:1623.22px;font-size:29.5px;line-height:29.5px;font-weight:normal;color:#212121;letter-spacing:-0.300px;">Monday</div><svg class="abs" style="left:2449px;top:1614px" width="48" height="48" viewBox="0 0 24 24"><path fill="#8a8a8a" d="M4 13c1.1 0 2-.9 2-2s-.9-2-2-2-2 .9-2 2 .9 2 2 2zm1.13 1.1c-.37-.06-.74-.1-1.13-.1-.99 0-1.93.21-2.78.58C.48 14.9 0 15.62 0 16.43V18h4.5v-1.61c0-.83.23-1.61.63-2.29zM20 13c1.1 0 2-.9 2-2s-.9-2-2-2-2 .9-2 2 .9 2 2 2zm4 3.43c0-.81-.48-1.53-1.22-1.85-.85-.37-1.79-.58-2.78-.58-.39 0-.76.04-1.13.1.4.68.63 1.46.63 2.29V18H24v-1.57zm-7.76-2.78c-1.17-.52-2.61-.9-4.24-.9-1.63 0-3.07.39-4.24.9C6.68 14.13 6 15.21 6 16.39V18h12v-1.61c0-1.18-.68-2.26-1.76-2.74zM8.07 16c.09-.23.13-.39.91-.69.97-.38 1.99-.56 3.02-.56s2.05.18 3.02.56c.77.3.81.46.91.69H8.07zM12 8c.55 0 1 .45 1 1s-.45 1-1 1-1-.45-1-1 .45-1 1-1m0-2c-1.66 0-3 1.34-3 3s1.34 3 3 3 3-1.34 3-3-1.34-3-3-3z"/></svg><svg class="abs" style="left:2525.3px;top:1618px" width="40" height="40" viewBox="0 0 24 24"><path fill="#8a8a8a" d="M12 6c3.79 0 7.17 2.13 8.82 5.5C19.17 14.87 15.79 17 12 17s-7.17-2.13-8.82-5.5C4.83 8.13 8.21 6 12 6m0-2C7 4 2.73 7.11 1 11.5 2.73 15.89 7 19 12 19s9.27-3.11 11-7.5C21.27 7.11 17 4 12 4zm0 5c1.38 0 2.5 1.12 2.5 2.5S13.38 14 12 14s-2.5-1.12-2.5-2.5S10.62 9 12 9m0-2c-2.48 0-4.5 2.02-4.5 4.5S9.52 16 12 16s4.5-2.02 4.5-4.5S14.48 7 12 7z"/></svg><svg class="abs" style="left:2596.7px;top:1618px" width="40" height="40" viewBox="0 0 24 24"><path fill="#8a8a8a" d="M16 1H4c-1.1 0-2 .9-2 2v14h2V3h12V1zm3 4H8c-1.1 0-2 .9-2 2v14c0 1.1.9 2 2 2h11c1.1 0 2-.9 2-2V7c0-1.1-.9-2-2-2zm0 16H8V7h11v14z"/></svg><svg class="abs" style="left:2669.3px;top:1618px" width="40" height="40" viewBox="0 0 24 24"><path fill="#f0ad3c" d="M13 3c-4.97 0-9 4.03-9 9H1l3.89 3.89.07.14L9 12H6c0-3.87 3.13-7 7-7s7 3.13 7 7-3.13 7-7 7c-1.93 0-3.68-.79-4.94-2.06l-1.42 1.42C8.27 19.99 10.51 21 13 21c4.97 0 9-4.03 9-9s-4.03-9-9-9zm-1 5v5l4.28 2.54.72-1.21-3.5-2.08V8H12z"/></svg><svg class="abs" style="left:2740.7px;top:1618px" width="40" height="40" viewBox="0 0 24 24"><rect x="2" y="20" width="20" height="4" fill="#3b78f5"/><path d="M4.6 17 V13.9 L13.5 5 L16.6 8.1 L7.7 17 Z" fill="none" stroke="#3b78f5" stroke-width="1.9" stroke-linejoin="round"/><path d="M15.3 3.2 L17 1.5 C17.4 1.1 18 1.1 18.4 1.5 L20.1 3.2 C20.5 3.6 20.5 4.2 20.1 4.6 L18.4 6.3 Z" fill="#3b78f5"/></svg></div></div>
<div class="abs" style="left:170px;top:1640px;width:2720px;height:2px;background:#e6e6e6"></div>
<div class="abs t" style="left:2296.60px;top:1678.80px;font-size:29px;line-height:29px;font-weight:normal;color:#555;letter-spacing:-0.167px;">Rows per page</div>
<div class="abs t" style="left:2507.10px;top:1677.96px;font-size:30.5px;line-height:30.5px;font-weight:normal;color:#212121;letter-spacing:0.000px;">50</div>
<svg class="abs" style="left:2554px;top:1688px" width="22" height="16" viewBox="0 0 22 16" fill="#6b6b6b"><path d="M1.3 2 H20.7 L11 11.8 Z"/></svg>
<div class="abs t" style="left:2619.10px;top:1680.55px;font-size:25.5px;line-height:25.5px;font-weight:normal;color:#212121;letter-spacing:-2.567px;">1-18</div>
<div class="abs t" style="left:2668.00px;top:1680.55px;font-size:25.5px;line-height:25.5px;font-weight:normal;color:#212121;letter-spacing:0.200px;">of</div>
<div class="abs t" style="left:2695.20px;top:1680.55px;font-size:25.5px;line-height:25.5px;font-weight:normal;color:#212121;letter-spacing:-2.300px;">18</div>
<svg class="abs" style="left:2770px;top:1680px" width="26" height="30" viewBox="0 0 26 30" fill="none" stroke="#cfcfcf" stroke-width="3.2"><path d="M19.5 3.5 L8.5 15 L19.5 26.5"/></svg>
<svg class="abs" style="left:2832px;top:1680px" width="26" height="30" viewBox="0 0 26 30" fill="none" stroke="#cfcfcf" stroke-width="3.2"><path d="M6.5 3.5 L17.5 15 L6.5 26.5"/></svg>
</body></html>
